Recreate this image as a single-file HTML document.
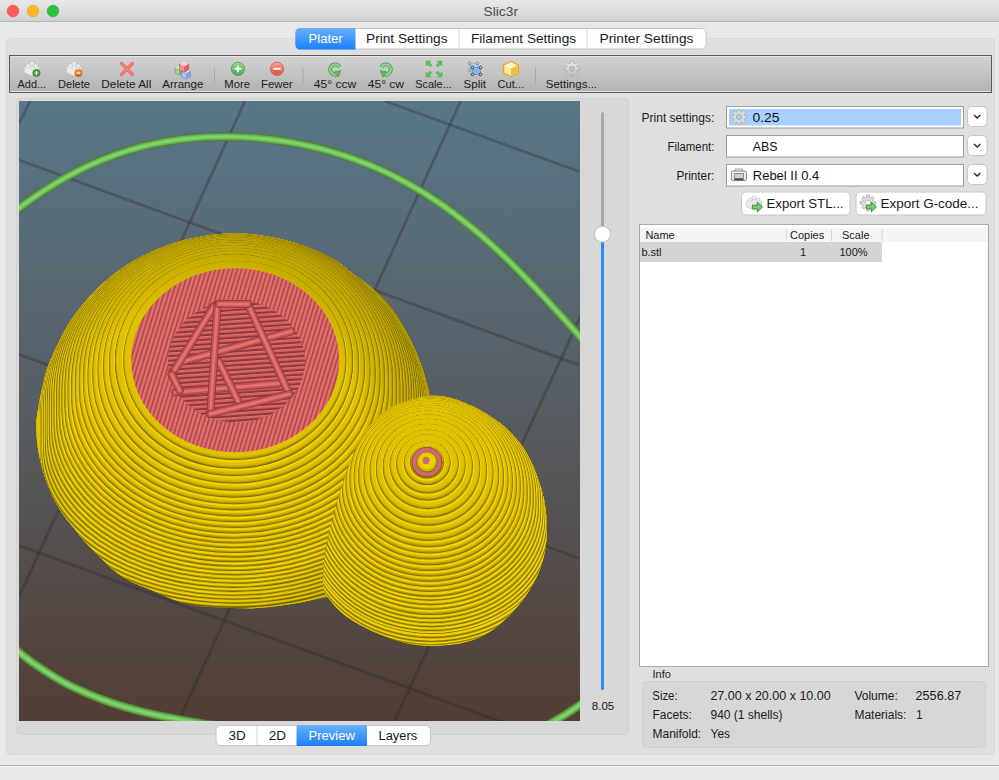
<!DOCTYPE html>
<html><head><meta charset="utf-8"><title>Slic3r</title>
<style>
html,body{margin:0;padding:0;width:999px;height:780px;overflow:hidden;background:#e8e8e8;}
svg{display:block;font-family:"Liberation Sans",sans-serif;}
</style></head><body>
<svg width="999" height="780" viewBox="0 0 999 780">
<defs>
<linearGradient id="gTitle" x1="0" y1="0" x2="0" y2="1"><stop offset="0" stop-color="#e8e8e8"/><stop offset="1" stop-color="#d1d1d1"/></linearGradient>
<linearGradient id="gTool" x1="0" y1="0" x2="0" y2="1"><stop offset="0" stop-color="#d2d2d2"/><stop offset="1" stop-color="#b3b3b3"/></linearGradient>
<linearGradient id="gBlue" x1="0" y1="0" x2="0" y2="1"><stop offset="0" stop-color="#69b1fb"/><stop offset="1" stop-color="#1b7ffb"/></linearGradient>

</defs>
<!-- window -->
<rect x="0" y="0" width="999" height="780" fill="#e8e8e8"/>
<rect x="0" y="0" width="999" height="21.5" fill="url(#gTitle)"/>
<rect x="0" y="21" width="999" height="1" fill="#b8b8b8"/>
<circle cx="13" cy="11" r="5.8" fill="#fd5c55" stroke="#e0443e" stroke-width="0.6"/>
<circle cx="33" cy="11" r="5.8" fill="#fdb82d" stroke="#dea024" stroke-width="0.6"/>
<circle cx="53" cy="11" r="5.8" fill="#29c43f" stroke="#1ca92d" stroke-width="0.6"/>
<text x="483.5" y="16" font-size="13" fill="#4b4b4b" textLength="34.5" lengthAdjust="spacingAndGlyphs">Slic3r</text>

<!-- group box -->
<rect x="6.5" y="38.5" width="988" height="716" rx="3.5" fill="#dfdfdf" stroke="#d9d9d9"/>
<!-- bottom status separator -->
<rect x="0" y="765" width="999" height="1" fill="#afafaf"/>
<rect x="0" y="766" width="999" height="1" fill="#f8f8f8"/>
<rect x="0" y="767" width="999" height="13" fill="#e8e8e8"/>

<!-- tabs -->
<rect x="295.5" y="28.5" width="410.5" height="20.5" rx="4.5" fill="#ffffff" stroke="#c5c5c5"/>
<path d="M300,28 h55.5 v21.5 h-55.5 a4.5,4.5 0 0 1 -4.5,-4.5 v-12.5 a4.5,4.5 0 0 1 4.5,-4.5z" fill="url(#gBlue)"/>
<rect x="458.5" y="29" width="1" height="20" fill="#dcdcdc"/>
<rect x="586.5" y="29" width="1" height="20" fill="#dcdcdc"/>
<g font-size="13" fill="#1a1a1a">
<text x="308.6" y="42.8" fill="#ffffff" textLength="34" lengthAdjust="spacingAndGlyphs">Plater</text>
<text x="366" y="42.8" textLength="81.5" lengthAdjust="spacingAndGlyphs">Print Settings</text>
<text x="471" y="42.8" textLength="105" lengthAdjust="spacingAndGlyphs">Filament Settings</text>
<text x="599.5" y="42.8" textLength="94" lengthAdjust="spacingAndGlyphs">Printer Settings</text>
</g>

<!-- toolbar -->
<rect x="9" y="55" width="983" height="38" fill="#5a5a5a"/>
<rect x="10" y="56" width="981" height="36" fill="#e6e6e6"/>
<rect x="10" y="57" width="981" height="34" fill="url(#gTool)"/>
<rect x="10" y="91" width="981" height="1" fill="#e2e2e2"/>
<g fill="#a9a9a9">
<rect x="214" y="68" width="1" height="16"/>
<rect x="302.5" y="68" width="1" height="16"/>
<rect x="535" y="68" width="1" height="16"/>
</g>
<g font-size="11" fill="#1b1b1b" text-anchor="middle">
<text x="31.8" y="88" textLength="28.5" lengthAdjust="spacingAndGlyphs">Add...</text>
<text x="74" y="88" textLength="32" lengthAdjust="spacingAndGlyphs">Delete</text>
<text x="126.3" y="88" textLength="50" lengthAdjust="spacingAndGlyphs">Delete All</text>
<text x="182.8" y="88" textLength="41" lengthAdjust="spacingAndGlyphs">Arrange</text>
<text x="237.2" y="88" textLength="25.7" lengthAdjust="spacingAndGlyphs">More</text>
<text x="276.8" y="88" textLength="31.6" lengthAdjust="spacingAndGlyphs">Fewer</text>
<text x="335" y="88" textLength="42.6" lengthAdjust="spacingAndGlyphs">45° ccw</text>
<text x="385.9" y="88" textLength="36.3" lengthAdjust="spacingAndGlyphs">45° cw</text>
<text x="433.5" y="88" textLength="36.6" lengthAdjust="spacingAndGlyphs">Scale...</text>
<text x="474.8" y="88" textLength="22.5" lengthAdjust="spacingAndGlyphs">Split</text>
<text x="510.8" y="88" textLength="26.5" lengthAdjust="spacingAndGlyphs">Cut...</text>
<text x="571.4" y="88" textLength="51.3" lengthAdjust="spacingAndGlyphs">Settings...</text>
</g>

<!-- left panel -->
<rect x="16.5" y="98.5" width="612" height="636" rx="3.5" fill="#d8d8d8" stroke="#d2d2d2"/>
<defs>
<clipPath id="cv"><rect x="19" y="101" width="561" height="620"/></clipPath>
<linearGradient id="gBg" x1="0" y1="0" x2="0" y2="1"><stop offset="0" stop-color="#587787"/><stop offset="0.45" stop-color="#575f66"/><stop offset="1" stop-color="#523e34"/></linearGradient>
<pattern id="pinkHatch" patternUnits="userSpaceOnUse" width="4.2" height="4" patternTransform="rotate(17)"><rect width="4.2" height="4" fill="#e46c6c"/><rect x="2.5" width="1.7" height="4" fill="#ad4c4c"/></pattern>
<pattern id="pinkStripe" patternUnits="userSpaceOnUse" width="4" height="4.6" patternTransform="rotate(-4)"><rect width="4" height="4.6" fill="#cf5c5c"/><rect y="0" width="4" height="1.2" fill="#e26e6e"/><rect y="2.8" width="4" height="1.8" fill="#8a3838"/></pattern>
</defs>
<g clip-path="url(#cv)">
<rect x="19" y="101" width="561" height="620" fill="url(#gBg)"/>
<g stroke="#262626" stroke-opacity="0.33" stroke-width="2.8" fill="none">
<line x1="384.6" y1="101" x2="579" y2="171.5"/>
<line x1="19" y1="160" x2="579" y2="365.1"/>
<line x1="19" y1="354.5" x2="579" y2="558.3"/>
<line x1="19" y1="545.6" x2="579" y2="750.2"/>
<line x1="30.2" y1="101" x2="19" y2="123.4"/>
<line x1="245" y1="101" x2="19" y2="597"/>
<line x1="460.7" y1="101" x2="178.6" y2="721"/>
<line x1="679.5" y1="101" x2="394.5" y2="721"/>
</g>
<path d="M-10,230.5 C-7.5,228.57 -1.67,223.97 5,218.9 C11.67,213.83 21.67,205.97 30,200.1 C38.33,194.23 46.67,188.73 55,183.7 C63.33,178.67 71.67,174.07 80,169.9 C88.33,165.73 96.67,162.02 105,158.7 C113.33,155.38 121.67,152.52 130,150 C138.33,147.48 146.67,145.37 155,143.6 C163.33,141.83 171.67,140.48 180,139.4 C188.33,138.32 196.67,137.55 205,137.1 C213.33,136.65 221.67,136.58 230,136.7 C238.33,136.82 246.67,137.13 255,137.8 C263.33,138.47 271.67,139.48 280,140.7 C288.33,141.92 296.67,143.33 305,145.1 C313.33,146.87 321.67,148.92 330,151.3 C338.33,153.68 346.67,156.37 355,159.4 C363.33,162.43 371.67,165.73 380,169.5 C388.33,173.27 396.67,177.45 405,182 C413.33,186.55 421.67,191.42 430,196.8 C438.33,202.18 446.67,208.02 455,214.3 C463.33,220.58 471.67,227.35 480,234.5 C488.33,241.65 496.67,249.23 505,257.2 C513.33,265.17 521.67,273.67 530,282.3 C538.33,290.93 546.67,299.93 555,309 C563.33,318.07 572.5,328.2 580,336.7 C587.5,345.2 596.67,356.12 600,360" fill="none" stroke="#4b7a2e" stroke-width="8.8" stroke-linecap="round"/>
<path d="M-10,230.5 C-7.5,228.57 -1.67,223.97 5,218.9 C11.67,213.83 21.67,205.97 30,200.1 C38.33,194.23 46.67,188.73 55,183.7 C63.33,178.67 71.67,174.07 80,169.9 C88.33,165.73 96.67,162.02 105,158.7 C113.33,155.38 121.67,152.52 130,150 C138.33,147.48 146.67,145.37 155,143.6 C163.33,141.83 171.67,140.48 180,139.4 C188.33,138.32 196.67,137.55 205,137.1 C213.33,136.65 221.67,136.58 230,136.7 C238.33,136.82 246.67,137.13 255,137.8 C263.33,138.47 271.67,139.48 280,140.7 C288.33,141.92 296.67,143.33 305,145.1 C313.33,146.87 321.67,148.92 330,151.3 C338.33,153.68 346.67,156.37 355,159.4 C363.33,162.43 371.67,165.73 380,169.5 C388.33,173.27 396.67,177.45 405,182 C413.33,186.55 421.67,191.42 430,196.8 C438.33,202.18 446.67,208.02 455,214.3 C463.33,220.58 471.67,227.35 480,234.5 C488.33,241.65 496.67,249.23 505,257.2 C513.33,265.17 521.67,273.67 530,282.3 C538.33,290.93 546.67,299.93 555,309 C563.33,318.07 572.5,328.2 580,336.7 C587.5,345.2 596.67,356.12 600,360" fill="none" stroke="#5a963f" stroke-width="7.4" stroke-linecap="round"/>
<path d="M-10,230.5 C-7.5,228.57 -1.67,223.97 5,218.9 C11.67,213.83 21.67,205.97 30,200.1 C38.33,194.23 46.67,188.73 55,183.7 C63.33,178.67 71.67,174.07 80,169.9 C88.33,165.73 96.67,162.02 105,158.7 C113.33,155.38 121.67,152.52 130,150 C138.33,147.48 146.67,145.37 155,143.6 C163.33,141.83 171.67,140.48 180,139.4 C188.33,138.32 196.67,137.55 205,137.1 C213.33,136.65 221.67,136.58 230,136.7 C238.33,136.82 246.67,137.13 255,137.8 C263.33,138.47 271.67,139.48 280,140.7 C288.33,141.92 296.67,143.33 305,145.1 C313.33,146.87 321.67,148.92 330,151.3 C338.33,153.68 346.67,156.37 355,159.4 C363.33,162.43 371.67,165.73 380,169.5 C388.33,173.27 396.67,177.45 405,182 C413.33,186.55 421.67,191.42 430,196.8 C438.33,202.18 446.67,208.02 455,214.3 C463.33,220.58 471.67,227.35 480,234.5 C488.33,241.65 496.67,249.23 505,257.2 C513.33,265.17 521.67,273.67 530,282.3 C538.33,290.93 546.67,299.93 555,309 C563.33,318.07 572.5,328.2 580,336.7 C587.5,345.2 596.67,356.12 600,360" fill="none" stroke="#66aa4e" stroke-width="6.0" stroke-linecap="round"/>
<path d="M-10,230.5 C-7.5,228.57 -1.67,223.97 5,218.9 C11.67,213.83 21.67,205.97 30,200.1 C38.33,194.23 46.67,188.73 55,183.7 C63.33,178.67 71.67,174.07 80,169.9 C88.33,165.73 96.67,162.02 105,158.7 C113.33,155.38 121.67,152.52 130,150 C138.33,147.48 146.67,145.37 155,143.6 C163.33,141.83 171.67,140.48 180,139.4 C188.33,138.32 196.67,137.55 205,137.1 C213.33,136.65 221.67,136.58 230,136.7 C238.33,136.82 246.67,137.13 255,137.8 C263.33,138.47 271.67,139.48 280,140.7 C288.33,141.92 296.67,143.33 305,145.1 C313.33,146.87 321.67,148.92 330,151.3 C338.33,153.68 346.67,156.37 355,159.4 C363.33,162.43 371.67,165.73 380,169.5 C388.33,173.27 396.67,177.45 405,182 C413.33,186.55 421.67,191.42 430,196.8 C438.33,202.18 446.67,208.02 455,214.3 C463.33,220.58 471.67,227.35 480,234.5 C488.33,241.65 496.67,249.23 505,257.2 C513.33,265.17 521.67,273.67 530,282.3 C538.33,290.93 546.67,299.93 555,309 C563.33,318.07 572.5,328.2 580,336.7 C587.5,345.2 596.67,356.12 600,360" fill="none" stroke="#70bb5a" stroke-width="4.6" stroke-linecap="round"/>
<path d="M-10,230.5 C-7.5,228.57 -1.67,223.97 5,218.9 C11.67,213.83 21.67,205.97 30,200.1 C38.33,194.23 46.67,188.73 55,183.7 C63.33,178.67 71.67,174.07 80,169.9 C88.33,165.73 96.67,162.02 105,158.7 C113.33,155.38 121.67,152.52 130,150 C138.33,147.48 146.67,145.37 155,143.6 C163.33,141.83 171.67,140.48 180,139.4 C188.33,138.32 196.67,137.55 205,137.1 C213.33,136.65 221.67,136.58 230,136.7 C238.33,136.82 246.67,137.13 255,137.8 C263.33,138.47 271.67,139.48 280,140.7 C288.33,141.92 296.67,143.33 305,145.1 C313.33,146.87 321.67,148.92 330,151.3 C338.33,153.68 346.67,156.37 355,159.4 C363.33,162.43 371.67,165.73 380,169.5 C388.33,173.27 396.67,177.45 405,182 C413.33,186.55 421.67,191.42 430,196.8 C438.33,202.18 446.67,208.02 455,214.3 C463.33,220.58 471.67,227.35 480,234.5 C488.33,241.65 496.67,249.23 505,257.2 C513.33,265.17 521.67,273.67 530,282.3 C538.33,290.93 546.67,299.93 555,309 C563.33,318.07 572.5,328.2 580,336.7 C587.5,345.2 596.67,356.12 600,360" fill="none" stroke="#79c864" stroke-width="3.2" stroke-linecap="round"/>
<path d="M-10,230.5 C-7.5,228.57 -1.67,223.97 5,218.9 C11.67,213.83 21.67,205.97 30,200.1 C38.33,194.23 46.67,188.73 55,183.7 C63.33,178.67 71.67,174.07 80,169.9 C88.33,165.73 96.67,162.02 105,158.7 C113.33,155.38 121.67,152.52 130,150 C138.33,147.48 146.67,145.37 155,143.6 C163.33,141.83 171.67,140.48 180,139.4 C188.33,138.32 196.67,137.55 205,137.1 C213.33,136.65 221.67,136.58 230,136.7 C238.33,136.82 246.67,137.13 255,137.8 C263.33,138.47 271.67,139.48 280,140.7 C288.33,141.92 296.67,143.33 305,145.1 C313.33,146.87 321.67,148.92 330,151.3 C338.33,153.68 346.67,156.37 355,159.4 C363.33,162.43 371.67,165.73 380,169.5 C388.33,173.27 396.67,177.45 405,182 C413.33,186.55 421.67,191.42 430,196.8 C438.33,202.18 446.67,208.02 455,214.3 C463.33,220.58 471.67,227.35 480,234.5 C488.33,241.65 496.67,249.23 505,257.2 C513.33,265.17 521.67,273.67 530,282.3 C538.33,290.93 546.67,299.93 555,309 C563.33,318.07 572.5,328.2 580,336.7 C587.5,345.2 596.67,356.12 600,360" fill="none" stroke="#82d46e" stroke-width="1.7" stroke-linecap="round"/>
<path d="M5,640 C8.33,642.83 18.33,651.83 25,657 C31.67,662.17 38.33,666.67 45,671 C51.67,675.33 58.33,679.42 65,683 C71.67,686.58 78.33,689.58 85,692.5 C91.67,695.42 98.33,698.08 105,700.5 C111.67,702.92 118.33,705.02 125,707 C131.67,708.98 138.33,710.77 145,712.4 C151.67,714.03 158.33,715.45 165,716.8 C171.67,718.15 178.33,719.3 185,720.5 C191.67,721.7 198.33,722.92 205,724 C211.67,725.08 218.33,726 225,727 C231.67,728 241.67,729.5 245,730" fill="none" stroke="#4b7a2e" stroke-width="8.8" stroke-linecap="round"/>
<path d="M5,640 C8.33,642.83 18.33,651.83 25,657 C31.67,662.17 38.33,666.67 45,671 C51.67,675.33 58.33,679.42 65,683 C71.67,686.58 78.33,689.58 85,692.5 C91.67,695.42 98.33,698.08 105,700.5 C111.67,702.92 118.33,705.02 125,707 C131.67,708.98 138.33,710.77 145,712.4 C151.67,714.03 158.33,715.45 165,716.8 C171.67,718.15 178.33,719.3 185,720.5 C191.67,721.7 198.33,722.92 205,724 C211.67,725.08 218.33,726 225,727 C231.67,728 241.67,729.5 245,730" fill="none" stroke="#5a963f" stroke-width="7.4" stroke-linecap="round"/>
<path d="M5,640 C8.33,642.83 18.33,651.83 25,657 C31.67,662.17 38.33,666.67 45,671 C51.67,675.33 58.33,679.42 65,683 C71.67,686.58 78.33,689.58 85,692.5 C91.67,695.42 98.33,698.08 105,700.5 C111.67,702.92 118.33,705.02 125,707 C131.67,708.98 138.33,710.77 145,712.4 C151.67,714.03 158.33,715.45 165,716.8 C171.67,718.15 178.33,719.3 185,720.5 C191.67,721.7 198.33,722.92 205,724 C211.67,725.08 218.33,726 225,727 C231.67,728 241.67,729.5 245,730" fill="none" stroke="#66aa4e" stroke-width="6.0" stroke-linecap="round"/>
<path d="M5,640 C8.33,642.83 18.33,651.83 25,657 C31.67,662.17 38.33,666.67 45,671 C51.67,675.33 58.33,679.42 65,683 C71.67,686.58 78.33,689.58 85,692.5 C91.67,695.42 98.33,698.08 105,700.5 C111.67,702.92 118.33,705.02 125,707 C131.67,708.98 138.33,710.77 145,712.4 C151.67,714.03 158.33,715.45 165,716.8 C171.67,718.15 178.33,719.3 185,720.5 C191.67,721.7 198.33,722.92 205,724 C211.67,725.08 218.33,726 225,727 C231.67,728 241.67,729.5 245,730" fill="none" stroke="#70bb5a" stroke-width="4.6" stroke-linecap="round"/>
<path d="M5,640 C8.33,642.83 18.33,651.83 25,657 C31.67,662.17 38.33,666.67 45,671 C51.67,675.33 58.33,679.42 65,683 C71.67,686.58 78.33,689.58 85,692.5 C91.67,695.42 98.33,698.08 105,700.5 C111.67,702.92 118.33,705.02 125,707 C131.67,708.98 138.33,710.77 145,712.4 C151.67,714.03 158.33,715.45 165,716.8 C171.67,718.15 178.33,719.3 185,720.5 C191.67,721.7 198.33,722.92 205,724 C211.67,725.08 218.33,726 225,727 C231.67,728 241.67,729.5 245,730" fill="none" stroke="#79c864" stroke-width="3.2" stroke-linecap="round"/>
<path d="M5,640 C8.33,642.83 18.33,651.83 25,657 C31.67,662.17 38.33,666.67 45,671 C51.67,675.33 58.33,679.42 65,683 C71.67,686.58 78.33,689.58 85,692.5 C91.67,695.42 98.33,698.08 105,700.5 C111.67,702.92 118.33,705.02 125,707 C131.67,708.98 138.33,710.77 145,712.4 C151.67,714.03 158.33,715.45 165,716.8 C171.67,718.15 178.33,719.3 185,720.5 C191.67,721.7 198.33,722.92 205,724 C211.67,725.08 218.33,726 225,727 C231.67,728 241.67,729.5 245,730" fill="none" stroke="#82d46e" stroke-width="1.7" stroke-linecap="round"/>
<path d="M540,730.5 C542,729.17 548.67,724.62 552,722.5 C555.33,720.38 557,719.62 560,717.8 C563,715.98 566.67,713.77 570,711.6 C573.33,709.43 576.33,707.4 580,704.8 C583.67,702.2 590,697.47 592,696" fill="none" stroke="#4b7a2e" stroke-width="8.8" stroke-linecap="round"/>
<path d="M540,730.5 C542,729.17 548.67,724.62 552,722.5 C555.33,720.38 557,719.62 560,717.8 C563,715.98 566.67,713.77 570,711.6 C573.33,709.43 576.33,707.4 580,704.8 C583.67,702.2 590,697.47 592,696" fill="none" stroke="#5a963f" stroke-width="7.4" stroke-linecap="round"/>
<path d="M540,730.5 C542,729.17 548.67,724.62 552,722.5 C555.33,720.38 557,719.62 560,717.8 C563,715.98 566.67,713.77 570,711.6 C573.33,709.43 576.33,707.4 580,704.8 C583.67,702.2 590,697.47 592,696" fill="none" stroke="#66aa4e" stroke-width="6.0" stroke-linecap="round"/>
<path d="M540,730.5 C542,729.17 548.67,724.62 552,722.5 C555.33,720.38 557,719.62 560,717.8 C563,715.98 566.67,713.77 570,711.6 C573.33,709.43 576.33,707.4 580,704.8 C583.67,702.2 590,697.47 592,696" fill="none" stroke="#70bb5a" stroke-width="4.6" stroke-linecap="round"/>
<path d="M540,730.5 C542,729.17 548.67,724.62 552,722.5 C555.33,720.38 557,719.62 560,717.8 C563,715.98 566.67,713.77 570,711.6 C573.33,709.43 576.33,707.4 580,704.8 C583.67,702.2 590,697.47 592,696" fill="none" stroke="#79c864" stroke-width="3.2" stroke-linecap="round"/>
<path d="M540,730.5 C542,729.17 548.67,724.62 552,722.5 C555.33,720.38 557,719.62 560,717.8 C563,715.98 566.67,713.77 570,711.6 C573.33,709.43 576.33,707.4 580,704.8 C583.67,702.2 590,697.47 592,696" fill="none" stroke="#82d46e" stroke-width="1.7" stroke-linecap="round"/>
<clipPath id="cBig"><path d="M234,233.2 C246.73,233.03 259,235.1 270,237 C281,238.9 289.72,241.1 300,244.6 C310.28,248.1 322.37,252.72 331.7,258 C341.03,263.28 349.12,271.23 356,276.3 C362.88,281.37 366.92,283.12 373,288.4 C379.08,293.68 386.83,300.68 392.5,308 C398.17,315.32 402.53,323.8 407,332.3 C411.47,340.8 416.03,350.88 419.3,359 C422.57,367.12 424.77,374.5 426.6,381 C428.43,387.5 429.4,389.83 430.3,398 C431.2,406.17 432.38,418 432,430 C431.62,442 430.83,455 428,470 C425.17,485 421.33,504.67 415,520 C408.67,535.33 400.83,550.33 390,562 C379.17,573.67 363.5,583.5 350,590 C336.5,596.5 322.33,598.17 309,601 C295.67,603.83 281.67,605.78 270,607 C258.33,608.22 252.33,608.7 239,608.3 C225.67,607.9 204.17,607.48 190,604.6 C175.83,601.72 165.38,595.77 154,591 C142.62,586.23 131.7,582.67 121.7,576 C111.7,569.33 101.62,558.6 94,551 C86.38,543.4 81.83,537.57 76,530.4 C70.17,523.23 64,516.4 59,508 C54,499.6 49.47,489.67 46,480 C42.53,470.33 39.78,459.17 38.2,450 C36.62,440.83 36.5,431.97 36.5,425 C36.5,418.03 37.12,414.87 38.2,408.2 C39.28,401.53 41.1,392.63 43,385 C44.9,377.37 45.22,372.73 49.6,362.4 C53.98,352.07 61.67,335 69.3,323 C76.93,311 85.62,300.18 95.4,290.4 C105.18,280.62 117.1,271.37 128,264.3 C138.9,257.23 149.87,252.38 160.8,248 C171.73,243.62 181.4,240.47 193.6,238 C205.8,235.53 221.27,233.37 234,233.2Z"/></clipPath>
<clipPath id="cSmall"><path d="M440,395.5 C450.55,396.62 463.3,402.07 473.3,406.7 C483.3,411.33 492.22,417.2 500,423.3 C507.78,429.4 514.45,436.07 520,443.3 C525.55,450.53 529.42,457.8 533.3,466.7 C537.18,475.6 541.07,487.27 543.3,496.7 C545.53,506.13 546.42,514.42 546.7,523.3 C546.98,532.18 546.67,541.1 545,550 C543.33,558.9 540.87,567.82 536.7,576.7 C532.53,585.58 526.67,594.97 520,603.3 C513.33,611.63 504.48,620.58 496.7,626.7 C488.92,632.82 482.2,636.87 473.3,640 C464.4,643.13 453.85,644.83 443.3,645.5 C432.75,646.17 421.1,646.08 410,644 C398.9,641.92 387.25,637.55 376.7,633 C366.15,628.45 354.32,622.03 346.7,616.7 C339.08,611.37 334.9,606 331,601 C327.1,596 324.22,594.65 323.3,586.7 C322.38,578.75 323.88,564.97 325.5,553.3 C327.12,541.63 330.25,527.8 333,516.7 C335.75,505.6 338.75,496.7 342,486.7 C345.25,476.7 348.38,466.15 352.5,456.7 C356.62,447.25 361,437.78 366.7,430 C372.4,422.22 379.48,415 386.7,410 C393.92,405 401.12,402.42 410,400 C418.88,397.58 429.45,394.38 440,395.5Z"/></clipPath>
<g clip-path="url(#cBig)">
<path d="M234,233.2 C246.73,233.03 259,235.1 270,237 C281,238.9 289.72,241.1 300,244.6 C310.28,248.1 322.37,252.72 331.7,258 C341.03,263.28 349.12,271.23 356,276.3 C362.88,281.37 366.92,283.12 373,288.4 C379.08,293.68 386.83,300.68 392.5,308 C398.17,315.32 402.53,323.8 407,332.3 C411.47,340.8 416.03,350.88 419.3,359 C422.57,367.12 424.77,374.5 426.6,381 C428.43,387.5 429.4,389.83 430.3,398 C431.2,406.17 432.38,418 432,430 C431.62,442 430.83,455 428,470 C425.17,485 421.33,504.67 415,520 C408.67,535.33 400.83,550.33 390,562 C379.17,573.67 363.5,583.5 350,590 C336.5,596.5 322.33,598.17 309,601 C295.67,603.83 281.67,605.78 270,607 C258.33,608.22 252.33,608.7 239,608.3 C225.67,607.9 204.17,607.48 190,604.6 C175.83,601.72 165.38,595.77 154,591 C142.62,586.23 131.7,582.67 121.7,576 C111.7,569.33 101.62,558.6 94,551 C86.38,543.4 81.83,537.57 76,530.4 C70.17,523.23 64,516.4 59,508 C54,499.6 49.47,489.67 46,480 C42.53,470.33 39.78,459.17 38.2,450 C36.62,440.83 36.5,431.97 36.5,425 C36.5,418.03 37.12,414.87 38.2,408.2 C39.28,401.53 41.1,392.63 43,385 C44.9,377.37 45.22,372.73 49.6,362.4 C53.98,352.07 61.67,335 69.3,323 C76.93,311 85.62,300.18 95.4,290.4 C105.18,280.62 117.1,271.37 128,264.3 C138.9,257.23 149.87,252.38 160.8,248 C171.73,243.62 181.4,240.47 193.6,238 C205.8,235.53 221.27,233.37 234,233.2Z" fill="#b89d00"/>
<path d="M36.5,430.1 A197.5,177.8 0 0 1 431.5,430.1 L431.5,489.4 A197.5,118.5 0 0 1 36.5,489.4Z" fill="#7a6600"/>
<path d="M36.95,429.75 A197.05,177.35 0 0 1 431.05,429.75 L431.05,489.05 A197.05,118.05 0 0 1 36.95,489.05Z" fill="#ad9200"/>
<path d="M37.5,429.2 A196.5,176.8 0 0 1 430.5,429.2 L430.5,488.5 A196.5,117.5 0 0 1 37.5,488.5Z" fill="#d0b300"/>
<path d="M38.3,428.5 A195.7,176 0 0 1 429.7,428.5 L429.7,487.8 A195.7,116.7 0 0 1 38.3,487.8Z" fill="#e0c300"/>
<path d="M36,430.6 A198,178.3 0 0 1 432,430.6 L432,489.53 A198,119.37 0 0 1 36,489.53Z" fill="none" stroke="#f2d800" stroke-width="1.4"/>
<path d="M36.5,429.6 A197.5,177.8 0 0 1 431.5,429.6 L431.5,488.53 A197.5,118.87 0 0 1 36.5,488.53Z" fill="#7a6600"/>
<path d="M36.95,429.25 A197.05,177.35 0 0 1 431.05,429.25 L431.05,488.18 A197.05,118.42 0 0 1 36.95,488.18Z" fill="#ad9200"/>
<path d="M37.5,428.7 A196.5,176.8 0 0 1 430.5,428.7 L430.5,487.63 A196.5,117.87 0 0 1 37.5,487.63Z" fill="#d0b300"/>
<path d="M38.3,428 A195.7,176 0 0 1 429.7,428 L429.7,486.93 A195.7,117.07 0 0 1 38.3,486.93Z" fill="#e0c300"/>
<path d="M36.22,427.03 A197.78,178.1 0 0 1 431.78,427.03 L431.78,483.24 A197.78,121.9 0 0 1 36.22,483.24Z" fill="none" stroke="#f2d800" stroke-width="1.4"/>
<path d="M36.72,426.03 A197.28,177.6 0 0 1 431.28,426.03 L431.28,482.24 A197.28,121.4 0 0 1 36.72,482.24Z" fill="#7a6600"/>
<path d="M37.17,425.68 A196.83,177.15 0 0 1 430.83,425.68 L430.83,481.89 A196.83,120.95 0 0 1 37.17,481.89Z" fill="#ad9200"/>
<path d="M37.72,425.13 A196.28,176.6 0 0 1 430.28,425.13 L430.28,481.34 A196.28,120.4 0 0 1 37.72,481.34Z" fill="#d0b300"/>
<path d="M38.52,424.43 A195.48,175.8 0 0 1 429.48,424.43 L429.48,480.64 A195.48,119.6 0 0 1 38.52,480.64Z" fill="#e0c300"/>
<path d="M36.74,423.67 A197.26,177.64 0 0 1 431.26,423.67 L431.26,477.22 A197.26,124.08 0 0 1 36.74,477.22Z" fill="none" stroke="#f2d800" stroke-width="1.4"/>
<path d="M37.24,422.67 A196.76,177.14 0 0 1 430.76,422.67 L430.76,476.22 A196.76,123.58 0 0 1 37.24,476.22Z" fill="#7a6600"/>
<path d="M37.69,422.32 A196.31,176.69 0 0 1 430.31,422.32 L430.31,475.87 A196.31,123.13 0 0 1 37.69,475.87Z" fill="#ad9200"/>
<path d="M38.24,421.77 A195.76,176.14 0 0 1 429.76,421.77 L429.76,475.32 A195.76,122.58 0 0 1 38.24,475.32Z" fill="#d0b300"/>
<path d="M39.04,421.07 A194.96,175.34 0 0 1 428.96,421.07 L428.96,474.62 A194.96,121.78 0 0 1 39.04,474.62Z" fill="#e0c300"/>
<path d="M37.51,420.47 A196.49,176.94 0 0 1 430.49,420.47 L430.49,471.43 A196.49,125.98 0 0 1 37.51,471.43Z" fill="none" stroke="#f2d800" stroke-width="1.4"/>
<path d="M38.01,419.47 A195.99,176.44 0 0 1 429.99,419.47 L429.99,470.43 A195.99,125.48 0 0 1 38.01,470.43Z" fill="#7a6600"/>
<path d="M38.46,419.12 A195.54,175.99 0 0 1 429.54,419.12 L429.54,470.08 A195.54,125.03 0 0 1 38.46,470.08Z" fill="#ad9200"/>
<path d="M39.01,418.57 A194.99,175.44 0 0 1 428.99,418.57 L428.99,469.53 A194.99,124.48 0 0 1 39.01,469.53Z" fill="#d0b300"/>
<path d="M39.81,417.87 A194.19,174.64 0 0 1 428.19,417.87 L428.19,468.83 A194.19,123.68 0 0 1 39.81,468.83Z" fill="#e0c300"/>
<path d="M38.51,417.41 A195.49,176.04 0 0 1 429.49,417.41 L429.49,465.83 A195.49,127.61 0 0 1 38.51,465.83Z" fill="none" stroke="#f2d800" stroke-width="1.4"/>
<path d="M39.01,416.41 A194.99,175.54 0 0 1 428.99,416.41 L428.99,464.83 A194.99,127.11 0 0 1 39.01,464.83Z" fill="#7a6600"/>
<path d="M39.46,416.06 A194.54,175.09 0 0 1 428.54,416.06 L428.54,464.48 A194.54,126.66 0 0 1 39.46,464.48Z" fill="#ad9200"/>
<path d="M40.01,415.51 A193.99,174.54 0 0 1 427.99,415.51 L427.99,463.93 A193.99,126.11 0 0 1 40.01,463.93Z" fill="#d0b300"/>
<path d="M40.81,414.81 A193.19,173.74 0 0 1 427.19,414.81 L427.19,463.23 A193.19,125.31 0 0 1 40.81,463.23Z" fill="#e0c300"/>
<path d="M39.72,414.46 A194.28,174.95 0 0 1 428.28,414.46 L428.28,460.4 A194.28,129.01 0 0 1 39.72,460.4Z" fill="none" stroke="#f2d800" stroke-width="1.4"/>
<path d="M40.22,413.46 A193.78,174.45 0 0 1 427.78,413.46 L427.78,459.4 A193.78,128.51 0 0 1 40.22,459.4Z" fill="#7a6600"/>
<path d="M40.67,413.11 A193.33,174 0 0 1 427.33,413.11 L427.33,459.05 A193.33,128.06 0 0 1 40.67,459.05Z" fill="#ad9200"/>
<path d="M41.22,412.56 A192.78,173.45 0 0 1 426.78,412.56 L426.78,458.5 A192.78,127.51 0 0 1 41.22,458.5Z" fill="#d0b300"/>
<path d="M42.02,411.86 A191.98,172.65 0 0 1 425.98,411.86 L425.98,457.8 A191.98,126.71 0 0 1 42.02,457.8Z" fill="#e0c300"/>
<path d="M41.12,411.62 A192.88,173.69 0 0 1 426.88,411.62 L426.88,455.11 A192.88,130.2 0 0 1 41.12,455.11Z" fill="none" stroke="#f2d800" stroke-width="1.4"/>
<path d="M41.62,410.62 A192.38,173.19 0 0 1 426.38,410.62 L426.38,454.11 A192.38,129.7 0 0 1 41.62,454.11Z" fill="#7a6600"/>
<path d="M42.07,410.27 A191.93,172.74 0 0 1 425.93,410.27 L425.93,453.76 A191.93,129.25 0 0 1 42.07,453.76Z" fill="#ad9200"/>
<path d="M42.62,409.72 A191.38,172.19 0 0 1 425.38,409.72 L425.38,453.21 A191.38,128.7 0 0 1 42.62,453.21Z" fill="#d0b300"/>
<path d="M43.42,409.02 A190.58,171.39 0 0 1 424.58,409.02 L424.58,452.51 A190.58,127.9 0 0 1 43.42,452.51Z" fill="#e0c300"/>
<path d="M42.7,408.87 A191.3,172.27 0 0 1 425.3,408.87 L425.3,449.96 A191.3,131.18 0 0 1 42.7,449.96Z" fill="none" stroke="#f2d800" stroke-width="1.4"/>
<path d="M43.2,407.87 A190.8,171.77 0 0 1 424.8,407.87 L424.8,448.96 A190.8,130.68 0 0 1 43.2,448.96Z" fill="#7a6600"/>
<path d="M43.65,407.52 A190.35,171.32 0 0 1 424.35,407.52 L424.35,448.61 A190.35,130.23 0 0 1 43.65,448.61Z" fill="#ad9200"/>
<path d="M44.2,406.97 A189.8,170.77 0 0 1 423.8,406.97 L423.8,448.06 A189.8,129.68 0 0 1 44.2,448.06Z" fill="#d0b300"/>
<path d="M45,406.27 A189,169.97 0 0 1 423,406.27 L423,447.36 A189,128.88 0 0 1 45,447.36Z" fill="#e0c300"/>
<path d="M44.44,406.19 A189.56,170.7 0 0 1 423.56,406.19 L423.56,444.93 A189.56,131.97 0 0 1 44.44,444.93Z" fill="none" stroke="#f2d800" stroke-width="1.4"/>
<path d="M44.94,405.19 A189.06,170.2 0 0 1 423.06,405.19 L423.06,443.93 A189.06,131.47 0 0 1 44.94,443.93Z" fill="#7a6600"/>
<path d="M45.39,404.84 A188.61,169.75 0 0 1 422.61,404.84 L422.61,443.58 A188.61,131.02 0 0 1 45.39,443.58Z" fill="#ad9200"/>
<path d="M45.94,404.29 A188.06,169.2 0 0 1 422.06,404.29 L422.06,443.03 A188.06,130.47 0 0 1 45.94,443.03Z" fill="#d0b300"/>
<path d="M46.74,403.59 A187.26,168.4 0 0 1 421.26,403.59 L421.26,442.33 A187.26,129.67 0 0 1 46.74,442.33Z" fill="#e0c300"/>
<path d="M46.35,403.59 A187.65,168.98 0 0 1 421.65,403.59 L421.65,440 A187.65,132.57 0 0 1 46.35,440Z" fill="none" stroke="#f2d800" stroke-width="1.4"/>
<path d="M46.85,402.59 A187.15,168.48 0 0 1 421.15,402.59 L421.15,439 A187.15,132.07 0 0 1 46.85,439Z" fill="#7a6600"/>
<path d="M47.3,402.24 A186.7,168.03 0 0 1 420.7,402.24 L420.7,438.65 A186.7,131.62 0 0 1 47.3,438.65Z" fill="#ad9200"/>
<path d="M47.85,401.69 A186.15,167.48 0 0 1 420.15,401.69 L420.15,438.1 A186.15,131.07 0 0 1 47.85,438.1Z" fill="#d0b300"/>
<path d="M48.65,400.99 A185.35,166.68 0 0 1 419.35,400.99 L419.35,437.4 A185.35,130.27 0 0 1 48.65,437.4Z" fill="#e0c300"/>
<path d="M48.41,401.06 A185.59,167.12 0 0 1 419.59,401.06 L419.59,435.19 A185.59,132.99 0 0 1 48.41,435.19Z" fill="none" stroke="#f2d800" stroke-width="1.4"/>
<path d="M48.91,400.06 A185.09,166.62 0 0 1 419.09,400.06 L419.09,434.19 A185.09,132.49 0 0 1 48.91,434.19Z" fill="#7a6600"/>
<path d="M49.36,399.71 A184.64,166.17 0 0 1 418.64,399.71 L418.64,433.84 A184.64,132.04 0 0 1 49.36,433.84Z" fill="#ad9200"/>
<path d="M49.91,399.16 A184.09,165.62 0 0 1 418.09,399.16 L418.09,433.29 A184.09,131.49 0 0 1 49.91,433.29Z" fill="#d0b300"/>
<path d="M50.71,398.46 A183.29,164.82 0 0 1 417.29,398.46 L417.29,432.59 A183.29,130.69 0 0 1 50.71,432.59Z" fill="#e0c300"/>
<path d="M50.63,398.58 A183.37,165.13 0 0 1 417.37,398.58 L417.37,430.47 A183.37,133.24 0 0 1 50.63,430.47Z" fill="none" stroke="#f2d800" stroke-width="1.4"/>
<path d="M51.13,397.58 A182.87,164.63 0 0 1 416.87,397.58 L416.87,429.47 A182.87,132.74 0 0 1 51.13,429.47Z" fill="#7a6600"/>
<path d="M51.58,397.23 A182.42,164.18 0 0 1 416.42,397.23 L416.42,429.12 A182.42,132.29 0 0 1 51.58,429.12Z" fill="#ad9200"/>
<path d="M52.13,396.68 A181.87,163.63 0 0 1 415.87,396.68 L415.87,428.57 A181.87,131.74 0 0 1 52.13,428.57Z" fill="#d0b300"/>
<path d="M52.93,395.98 A181.07,162.83 0 0 1 415.07,395.98 L415.07,427.87 A181.07,130.94 0 0 1 52.93,427.87Z" fill="#e0c300"/>
<path d="M52.99,396.16 A181.01,163 0 0 1 415.01,396.16 L415.01,425.84 A181.01,133.32 0 0 1 52.99,425.84Z" fill="none" stroke="#f2d800" stroke-width="1.4"/>
<path d="M53.49,395.16 A180.51,162.5 0 0 1 414.51,395.16 L414.51,424.84 A180.51,132.82 0 0 1 53.49,424.84Z" fill="#7a6600"/>
<path d="M53.94,394.81 A180.06,162.05 0 0 1 414.06,394.81 L414.06,424.49 A180.06,132.37 0 0 1 53.94,424.49Z" fill="#ad9200"/>
<path d="M54.49,394.26 A179.51,161.5 0 0 1 413.51,394.26 L413.51,423.94 A179.51,131.82 0 0 1 54.49,423.94Z" fill="#d0b300"/>
<path d="M55.29,393.56 A178.71,160.7 0 0 1 412.71,393.56 L412.71,423.24 A178.71,131.02 0 0 1 55.29,423.24Z" fill="#e0c300"/>
<path d="M55.5,393.79 A178.5,160.74 0 0 1 412.5,393.79 L412.5,421.31 A178.5,133.23 0 0 1 55.5,421.31Z" fill="none" stroke="#f2d800" stroke-width="1.4"/>
<path d="M56,392.79 A178,160.24 0 0 1 412,392.79 L412,420.31 A178,132.73 0 0 1 56,420.31Z" fill="#7a6600"/>
<path d="M56.45,392.44 A177.55,159.79 0 0 1 411.55,392.44 L411.55,419.96 A177.55,132.28 0 0 1 56.45,419.96Z" fill="#ad9200"/>
<path d="M57,391.89 A177,159.24 0 0 1 411,391.89 L411,419.41 A177,131.73 0 0 1 57,419.41Z" fill="#d0b300"/>
<path d="M57.8,391.19 A176.2,158.44 0 0 1 410.2,391.19 L410.2,418.71 A176.2,130.93 0 0 1 57.8,418.71Z" fill="#e0c300"/>
<path d="M58.15,391.48 A175.85,158.36 0 0 1 409.85,391.48 L409.85,416.87 A175.85,132.96 0 0 1 58.15,416.87Z" fill="none" stroke="#f2d800" stroke-width="1.4"/>
<path d="M58.65,390.48 A175.35,157.86 0 0 1 409.35,390.48 L409.35,415.87 A175.35,132.46 0 0 1 58.65,415.87Z" fill="#7a6600"/>
<path d="M59.1,390.13 A174.9,157.41 0 0 1 408.9,390.13 L408.9,415.52 A174.9,132.01 0 0 1 59.1,415.52Z" fill="#ad9200"/>
<path d="M59.65,389.58 A174.35,156.86 0 0 1 408.35,389.58 L408.35,414.97 A174.35,131.46 0 0 1 59.65,414.97Z" fill="#d0b300"/>
<path d="M60.45,388.88 A173.55,156.06 0 0 1 407.55,388.88 L407.55,414.27 A173.55,130.66 0 0 1 60.45,414.27Z" fill="#e0c300"/>
<path d="M60.95,389.21 A173.05,155.84 0 0 1 407.05,389.21 L407.05,412.52 A173.05,132.53 0 0 1 60.95,412.52Z" fill="none" stroke="#f2d800" stroke-width="1.4"/>
<path d="M61.45,388.21 A172.55,155.34 0 0 1 406.55,388.21 L406.55,411.52 A172.55,132.03 0 0 1 61.45,411.52Z" fill="#7a6600"/>
<path d="M61.9,387.86 A172.1,154.89 0 0 1 406.1,387.86 L406.1,411.17 A172.1,131.58 0 0 1 61.9,411.17Z" fill="#ad9200"/>
<path d="M62.45,387.31 A171.55,154.34 0 0 1 405.55,387.31 L405.55,410.62 A171.55,131.03 0 0 1 62.45,410.62Z" fill="#d0b300"/>
<path d="M63.25,386.61 A170.75,153.54 0 0 1 404.75,386.61 L404.75,409.92 A170.75,130.23 0 0 1 63.25,409.92Z" fill="#e0c300"/>
<path d="M63.89,386.99 A170.11,153.19 0 0 1 404.11,386.99 L404.11,408.26 A170.11,131.92 0 0 1 63.89,408.26Z" fill="none" stroke="#f2d800" stroke-width="1.4"/>
<path d="M64.39,385.99 A169.61,152.69 0 0 1 403.61,385.99 L403.61,407.26 A169.61,131.42 0 0 1 64.39,407.26Z" fill="#7a6600"/>
<path d="M64.84,385.64 A169.16,152.24 0 0 1 403.16,385.64 L403.16,406.91 A169.16,130.97 0 0 1 64.84,406.91Z" fill="#ad9200"/>
<path d="M65.39,385.09 A168.61,151.69 0 0 1 402.61,385.09 L402.61,406.36 A168.61,130.42 0 0 1 65.39,406.36Z" fill="#d0b300"/>
<path d="M66.19,384.39 A167.81,150.89 0 0 1 401.81,384.39 L401.81,405.66 A167.81,129.62 0 0 1 66.19,405.66Z" fill="#e0c300"/>
<path d="M67.13,384.7 A166.87,150.28 0 0 1 400.87,384.7 L400.87,403.88 A166.87,131.1 0 0 1 67.13,403.88Z" fill="none" stroke="#f2d800" stroke-width="1.4"/>
<path d="M67.63,383.7 A166.37,149.78 0 0 1 400.37,383.7 L400.37,402.88 A166.37,130.6 0 0 1 67.63,402.88Z" fill="#7a6600"/>
<path d="M68.08,383.35 A165.92,149.33 0 0 1 399.92,383.35 L399.92,402.53 A165.92,130.15 0 0 1 68.08,402.53Z" fill="#ad9200"/>
<path d="M68.63,382.8 A165.37,148.78 0 0 1 399.37,382.8 L399.37,401.98 A165.37,129.6 0 0 1 68.63,401.98Z" fill="#d0b300"/>
<path d="M69.43,382.1 A164.57,147.98 0 0 1 398.57,382.1 L398.57,401.28 A164.57,128.8 0 0 1 69.43,401.28Z" fill="#e0c300"/>
<path d="M70.66,382.38 A163.34,147.1 0 0 1 397.34,382.38 L397.34,399.44 A163.34,130.04 0 0 1 70.66,399.44Z" fill="none" stroke="#f2d800" stroke-width="1.4"/>
<path d="M71.16,381.38 A162.84,146.6 0 0 1 396.84,381.38 L396.84,398.44 A162.84,129.54 0 0 1 71.16,398.44Z" fill="#7a6600"/>
<path d="M71.61,381.03 A162.39,146.15 0 0 1 396.39,381.03 L396.39,398.09 A162.39,129.09 0 0 1 71.61,398.09Z" fill="#ad9200"/>
<path d="M72.16,380.48 A161.84,145.6 0 0 1 395.84,380.48 L395.84,397.54 A161.84,128.54 0 0 1 72.16,397.54Z" fill="#d0b300"/>
<path d="M72.96,379.78 A161.04,144.8 0 0 1 395.04,379.78 L395.04,396.84 A161.04,127.74 0 0 1 72.96,396.84Z" fill="#e0c300"/>
<path d="M74.43,380.07 A159.57,143.71 0 0 1 393.57,380.07 L393.57,395.03 A159.57,128.74 0 0 1 74.43,395.03Z" fill="none" stroke="#f2d800" stroke-width="1.4"/>
<path d="M74.93,379.07 A159.07,143.21 0 0 1 393.07,379.07 L393.07,394.03 A159.07,128.24 0 0 1 74.93,394.03Z" fill="#7a6600"/>
<path d="M75.38,378.72 A158.62,142.76 0 0 1 392.62,378.72 L392.62,393.68 A158.62,127.79 0 0 1 75.38,393.68Z" fill="#ad9200"/>
<path d="M75.93,378.17 A158.07,142.21 0 0 1 392.07,378.17 L392.07,393.13 A158.07,127.24 0 0 1 75.93,393.13Z" fill="#d0b300"/>
<path d="M76.73,377.47 A157.27,141.41 0 0 1 391.27,377.47 L391.27,392.43 A157.27,126.44 0 0 1 76.73,392.43Z" fill="#e0c300"/>
<path d="M78.36,377.81 A155.64,140.16 0 0 1 389.64,377.81 L389.64,390.75 A155.64,127.23 0 0 1 78.36,390.75Z" fill="none" stroke="#f2d800" stroke-width="1.4"/>
<path d="M78.86,376.81 A155.14,139.66 0 0 1 389.14,376.81 L389.14,389.75 A155.14,126.73 0 0 1 78.86,389.75Z" fill="#7a6600"/>
<path d="M79.31,376.46 A154.69,139.21 0 0 1 388.69,376.46 L388.69,389.4 A154.69,126.28 0 0 1 79.31,389.4Z" fill="#ad9200"/>
<path d="M79.86,375.91 A154.14,138.66 0 0 1 388.14,375.91 L388.14,388.85 A154.14,125.73 0 0 1 79.86,388.85Z" fill="#d0b300"/>
<path d="M80.66,375.21 A153.34,137.86 0 0 1 387.34,375.21 L387.34,388.15 A153.34,124.93 0 0 1 80.66,388.15Z" fill="#e0c300"/>
<path d="M82.54,375.58 A151.46,136.4 0 0 1 385.46,375.58 L385.46,386.52 A151.46,125.46 0 0 1 82.54,386.52Z" fill="none" stroke="#f2d800" stroke-width="1.4"/>
<path d="M83.04,374.58 A150.96,135.9 0 0 1 384.96,374.58 L384.96,385.52 A150.96,124.96 0 0 1 83.04,385.52Z" fill="#7a6600"/>
<path d="M83.49,374.23 A150.51,135.45 0 0 1 384.51,374.23 L384.51,385.17 A150.51,124.51 0 0 1 83.49,385.17Z" fill="#ad9200"/>
<path d="M84.04,373.68 A149.96,134.9 0 0 1 383.96,373.68 L383.96,384.62 A149.96,123.96 0 0 1 84.04,384.62Z" fill="#d0b300"/>
<path d="M84.84,372.98 A149.16,134.1 0 0 1 383.16,372.98 L383.16,383.92 A149.16,123.16 0 0 1 84.84,383.92Z" fill="#e0c300"/>
<path d="M87.05,373.33 A146.95,132.34 0 0 1 380.95,373.33 L380.95,382.3 A146.95,123.38 0 0 1 87.05,382.3Z" fill="none" stroke="#f2d800" stroke-width="1.4"/>
<path d="M87.55,372.33 A146.45,131.84 0 0 1 380.45,372.33 L380.45,381.3 A146.45,122.88 0 0 1 87.55,381.3Z" fill="#7a6600"/>
<path d="M88,371.98 A146,131.39 0 0 1 380,371.98 L380,380.95 A146,122.43 0 0 1 88,380.95Z" fill="#ad9200"/>
<path d="M88.55,371.43 A145.45,130.84 0 0 1 379.45,371.43 L379.45,380.4 A145.45,121.88 0 0 1 88.55,380.4Z" fill="#d0b300"/>
<path d="M89.35,370.73 A144.65,130.04 0 0 1 378.65,370.73 L378.65,379.7 A144.65,121.08 0 0 1 89.35,379.7Z" fill="#e0c300"/>
<path d="M91.81,371.12 A142.19,128.06 0 0 1 376.19,371.12 L376.19,378.17 A142.19,121.01 0 0 1 91.81,378.17Z" fill="none" stroke="#f2d800" stroke-width="1.4"/>
<path d="M92.31,370.12 A141.69,127.56 0 0 1 375.69,370.12 L375.69,377.17 A141.69,120.51 0 0 1 92.31,377.17Z" fill="#7a6600"/>
<path d="M92.76,369.77 A141.24,127.11 0 0 1 375.24,369.77 L375.24,376.82 A141.24,120.06 0 0 1 92.76,376.82Z" fill="#ad9200"/>
<path d="M93.31,369.22 A140.69,126.56 0 0 1 374.69,369.22 L374.69,376.27 A140.69,119.51 0 0 1 93.31,376.27Z" fill="#d0b300"/>
<path d="M94.11,368.52 A139.89,125.76 0 0 1 373.89,368.52 L373.89,375.57 A139.89,118.71 0 0 1 94.11,375.57Z" fill="#e0c300"/>
<path d="M96.98,368.88 A137.02,123.4 0 0 1 371.02,368.88 L371.02,374.03 A137.02,118.24 0 0 1 96.98,374.03Z" fill="none" stroke="#f2d800" stroke-width="1.4"/>
<path d="M97.48,367.88 A136.52,122.9 0 0 1 370.52,367.88 L370.52,373.03 A136.52,117.74 0 0 1 97.48,373.03Z" fill="#7a6600"/>
<path d="M97.93,367.53 A136.07,122.45 0 0 1 370.07,367.53 L370.07,372.68 A136.07,117.29 0 0 1 97.93,372.68Z" fill="#ad9200"/>
<path d="M98.48,366.98 A135.52,121.9 0 0 1 369.52,366.98 L369.52,372.13 A135.52,116.74 0 0 1 98.48,372.13Z" fill="#d0b300"/>
<path d="M99.28,366.28 A134.72,121.1 0 0 1 368.72,366.28 L368.72,371.43 A134.72,115.94 0 0 1 99.28,371.43Z" fill="#e0c300"/>
<path d="M102.52,366.66 A131.48,118.42 0 0 1 365.48,366.66 L365.48,369.98 A131.48,115.09 0 0 1 102.52,369.98Z" fill="none" stroke="#f2d800" stroke-width="1.4"/>
<path d="M103.02,365.66 A130.98,117.92 0 0 1 364.98,365.66 L364.98,368.98 A130.98,114.59 0 0 1 103.02,368.98Z" fill="#7a6600"/>
<path d="M103.47,365.31 A130.53,117.47 0 0 1 364.53,365.31 L364.53,368.63 A130.53,114.14 0 0 1 103.47,368.63Z" fill="#ad9200"/>
<path d="M104.02,364.76 A129.98,116.92 0 0 1 363.98,364.76 L363.98,368.08 A129.98,113.59 0 0 1 104.02,368.08Z" fill="#d0b300"/>
<path d="M104.82,364.06 A129.18,116.12 0 0 1 363.18,364.06 L363.18,367.38 A129.18,112.79 0 0 1 104.82,367.38Z" fill="#e0c300"/>
<path d="M108.41,364.47 A125.59,113.11 0 0 1 359.59,364.47 L359.59,366.05 A125.59,111.53 0 0 1 108.41,366.05Z" fill="none" stroke="#f2d800" stroke-width="1.4"/>
<path d="M108.91,363.47 A125.09,112.61 0 0 1 359.09,363.47 L359.09,365.05 A125.09,111.03 0 0 1 108.91,365.05Z" fill="#7a6600"/>
<path d="M109.36,363.12 A124.64,112.16 0 0 1 358.64,363.12 L358.64,364.7 A124.64,110.58 0 0 1 109.36,364.7Z" fill="#ad9200"/>
<path d="M109.91,362.57 A124.09,111.61 0 0 1 358.09,362.57 L358.09,364.15 A124.09,110.03 0 0 1 109.91,364.15Z" fill="#d0b300"/>
<path d="M110.71,361.87 A123.29,110.81 0 0 1 357.29,361.87 L357.29,363.45 A123.29,109.23 0 0 1 110.71,363.45Z" fill="#e0c300"/>
<path d="M114.45,362.4 A119.55,107.68 0 0 1 353.55,362.4 L353.55,362.4 A119.55,107.68 0 0 1 114.45,362.4Z" fill="none" stroke="#f2d800" stroke-width="1.4"/>
<path d="M114.95,361.4 A119.05,107.18 0 0 1 353.05,361.4 L353.05,361.4 A119.05,107.18 0 0 1 114.95,361.4Z" fill="#7a6600"/>
<path d="M115.4,361.05 A118.6,106.73 0 0 1 352.6,361.05 L352.6,361.05 A118.6,106.73 0 0 1 115.4,361.05Z" fill="#ad9200"/>
<path d="M115.95,360.5 A118.05,106.18 0 0 1 352.05,360.5 L352.05,360.5 A118.05,106.18 0 0 1 115.95,360.5Z" fill="#d0b300"/>
<path d="M116.75,359.8 A117.25,105.38 0 0 1 351.25,359.8 L351.25,359.8 A117.25,105.38 0 0 1 116.75,359.8Z" fill="#e0c300"/>
<path d="M114.95,361.4 A119.05,107.18 0 0 1 353.05,361.4 L353.05,361.4 A119.05,107.18 0 0 1 114.95,361.4Z" fill="#7a6600"/>
<path d="M115.4,361.05 A118.6,106.73 0 0 1 352.6,361.05 L352.6,361.05 A118.6,106.73 0 0 1 115.4,361.05Z" fill="#ad9200"/>
<path d="M115.95,360.5 A118.05,106.18 0 0 1 352.05,360.5 L352.05,360.5 A118.05,106.18 0 0 1 115.95,360.5Z" fill="#d0b300"/>
<path d="M116.75,359.8 A117.25,105.38 0 0 1 351.25,359.8 L351.25,359.8 A117.25,105.38 0 0 1 116.75,359.8Z" fill="#e0c300"/>
<path d="M122.7,361.4 A112.1,100.1 0 0 1 346.9,361.4 L346.9,361.4 A112.1,100.1 0 0 1 122.7,361.4Z" fill="none" stroke="#f2d800" stroke-width="1.4"/>
<path d="M123.2,360.4 A111.6,99.6 0 0 1 346.4,360.4 L346.4,360.4 A111.6,99.6 0 0 1 123.2,360.4Z" fill="#7a6600"/>
<path d="M123.65,360.05 A111.15,99.15 0 0 1 345.95,360.05 L345.95,360.05 A111.15,99.15 0 0 1 123.65,360.05Z" fill="#ad9200"/>
<path d="M124.2,359.5 A110.6,98.6 0 0 1 345.4,359.5 L345.4,359.5 A110.6,98.6 0 0 1 124.2,359.5Z" fill="#d0b300"/>
<path d="M125,358.8 A109.8,97.8 0 0 1 344.6,358.8 L344.6,358.8 A109.8,97.8 0 0 1 125,358.8Z" fill="#e0c300"/>
<radialGradient id="rimBig" gradientUnits="userSpaceOnUse" cx="215" cy="445" r="235" fx="215" fy="445"><stop offset="0.62" stop-color="#3a3000" stop-opacity="0"/><stop offset="0.88" stop-color="#3a3000" stop-opacity="0.22"/><stop offset="1" stop-color="#3a3000" stop-opacity="0.4"/></radialGradient>
<rect x="20" y="220" width="430" height="400" fill="url(#rimBig)"/>
</g>
<ellipse cx="235.2" cy="360.2" rx="104" ry="92" fill="url(#pinkHatch)"/>
<ellipse cx="236.5" cy="361.5" rx="68.5" ry="61" fill="url(#pinkStripe)"/>
<g stroke-linecap="round">
<line x1="181.5" y1="361.8" x2="291" y2="331.3" stroke="#8a3a3a" stroke-width="8"/>
<line x1="181.5" y1="361.8" x2="291" y2="331.3" stroke="#c45454" stroke-width="6.4"/>
<line x1="181.5" y1="361.8" x2="291" y2="331.3" stroke="#e87272" stroke-width="2.8"/>
<line x1="175.3" y1="392.3" x2="278.5" y2="383.4" stroke="#8a3a3a" stroke-width="8"/>
<line x1="175.3" y1="392.3" x2="278.5" y2="383.4" stroke="#c45454" stroke-width="6.4"/>
<line x1="175.3" y1="392.3" x2="278.5" y2="383.4" stroke="#e87272" stroke-width="2.8"/>
<line x1="219" y1="361.8" x2="240.8" y2="406.7" stroke="#8a3a3a" stroke-width="8"/>
<line x1="219" y1="361.8" x2="240.8" y2="406.7" stroke="#c45454" stroke-width="6.4"/>
<line x1="219" y1="361.8" x2="240.8" y2="406.7" stroke="#e87272" stroke-width="2.8"/>
<line x1="213.9" y1="306.2" x2="171.7" y2="374.4" stroke="#8a3a3a" stroke-width="8"/>
<line x1="213.9" y1="306.2" x2="171.7" y2="374.4" stroke="#c45454" stroke-width="6.4"/>
<line x1="213.9" y1="306.2" x2="171.7" y2="374.4" stroke="#e87272" stroke-width="2.8"/>
<line x1="171.7" y1="374.4" x2="179.7" y2="390.5" stroke="#8a3a3a" stroke-width="8"/>
<line x1="171.7" y1="374.4" x2="179.7" y2="390.5" stroke="#c45454" stroke-width="6.4"/>
<line x1="171.7" y1="374.4" x2="179.7" y2="390.5" stroke="#e87272" stroke-width="2.8"/>
<line x1="217.5" y1="304.4" x2="210.3" y2="413.9" stroke="#8a3a3a" stroke-width="8"/>
<line x1="217.5" y1="304.4" x2="210.3" y2="413.9" stroke="#c45454" stroke-width="6.4"/>
<line x1="217.5" y1="304.4" x2="210.3" y2="413.9" stroke="#e87272" stroke-width="2.8"/>
<line x1="248" y1="304.4" x2="289.3" y2="394.1" stroke="#8a3a3a" stroke-width="8"/>
<line x1="248" y1="304.4" x2="289.3" y2="394.1" stroke="#c45454" stroke-width="6.4"/>
<line x1="248" y1="304.4" x2="289.3" y2="394.1" stroke="#e87272" stroke-width="2.8"/>
<line x1="210.3" y1="413.9" x2="289.3" y2="394.1" stroke="#8a3a3a" stroke-width="8"/>
<line x1="210.3" y1="413.9" x2="289.3" y2="394.1" stroke="#c45454" stroke-width="6.4"/>
<line x1="210.3" y1="413.9" x2="289.3" y2="394.1" stroke="#e87272" stroke-width="2.8"/>
<line x1="219" y1="304" x2="248" y2="304" stroke="#8a3a3a" stroke-width="8"/>
<line x1="219" y1="304" x2="248" y2="304" stroke="#c45454" stroke-width="6.4"/>
<line x1="219" y1="304" x2="248" y2="304" stroke="#e87272" stroke-width="2.8"/>
</g>
<g clip-path="url(#cSmall)">
<path d="M440,395.5 C450.55,396.62 463.3,402.07 473.3,406.7 C483.3,411.33 492.22,417.2 500,423.3 C507.78,429.4 514.45,436.07 520,443.3 C525.55,450.53 529.42,457.8 533.3,466.7 C537.18,475.6 541.07,487.27 543.3,496.7 C545.53,506.13 546.42,514.42 546.7,523.3 C546.98,532.18 546.67,541.1 545,550 C543.33,558.9 540.87,567.82 536.7,576.7 C532.53,585.58 526.67,594.97 520,603.3 C513.33,611.63 504.48,620.58 496.7,626.7 C488.92,632.82 482.2,636.87 473.3,640 C464.4,643.13 453.85,644.83 443.3,645.5 C432.75,646.17 421.1,646.08 410,644 C398.9,641.92 387.25,637.55 376.7,633 C366.15,628.45 354.32,622.03 346.7,616.7 C339.08,611.37 334.9,606 331,601 C327.1,596 324.22,594.65 323.3,586.7 C322.38,578.75 323.88,564.97 325.5,553.3 C327.12,541.63 330.25,527.8 333,516.7 C335.75,505.6 338.75,496.7 342,486.7 C345.25,476.7 348.38,466.15 352.5,456.7 C356.62,447.25 361,437.78 366.7,430 C372.4,422.22 379.48,415 386.7,410 C393.92,405 401.12,402.42 410,400 C418.88,397.58 429.45,394.38 440,395.5Z" fill="#b89d00"/>
<path d="M310,530.31 A122,115.4 0 0 1 554,530.31 L554,550.55 A122,95.16 0 0 1 310,550.55Z" fill="#7a6600"/>
<path d="M310.45,529.96 A121.55,114.95 0 0 1 553.55,529.96 L553.55,550.2 A121.55,94.71 0 0 1 310.45,550.2Z" fill="#ad9200"/>
<path d="M311,529.41 A121,114.4 0 0 1 553,529.41 L553,549.65 A121,94.16 0 0 1 311,549.65Z" fill="#d0b300"/>
<path d="M311.8,528.71 A120.2,113.6 0 0 1 552.2,528.71 L552.2,548.95 A120.2,93.36 0 0 1 311.8,548.95Z" fill="#e0c300"/>
<path d="M309.48,530.74 A122.5,115.9 0 0 1 554.47,530.74 L554.47,550.8 A122.5,95.83 0 0 1 309.48,550.8Z" fill="none" stroke="#f2d800" stroke-width="1.4"/>
<path d="M309.98,529.74 A122,115.4 0 0 1 553.97,529.74 L553.97,549.8 A122,95.33 0 0 1 309.98,549.8Z" fill="#7a6600"/>
<path d="M310.43,529.39 A121.55,114.95 0 0 1 553.52,529.39 L553.52,549.45 A121.55,94.88 0 0 1 310.43,549.45Z" fill="#ad9200"/>
<path d="M310.98,528.84 A121,114.4 0 0 1 552.97,528.84 L552.97,548.9 A121,94.33 0 0 1 310.98,548.9Z" fill="#d0b300"/>
<path d="M311.78,528.14 A120.2,113.6 0 0 1 552.17,528.14 L552.17,548.2 A120.2,93.53 0 0 1 311.78,548.2Z" fill="#e0c300"/>
<path d="M309.49,527.51 A122.31,115.72 0 0 1 554.12,527.51 L554.12,546.56 A122.31,96.68 0 0 1 309.49,546.56Z" fill="none" stroke="#f2d800" stroke-width="1.4"/>
<path d="M309.99,526.51 A121.81,115.22 0 0 1 553.62,526.51 L553.62,545.56 A121.81,96.18 0 0 1 309.99,545.56Z" fill="#7a6600"/>
<path d="M310.44,526.16 A121.36,114.77 0 0 1 553.17,526.16 L553.17,545.21 A121.36,95.73 0 0 1 310.44,545.21Z" fill="#ad9200"/>
<path d="M310.99,525.61 A120.81,114.22 0 0 1 552.62,525.61 L552.62,544.66 A120.81,95.18 0 0 1 310.99,544.66Z" fill="#d0b300"/>
<path d="M311.79,524.91 A120.01,113.42 0 0 1 551.82,524.91 L551.82,543.96 A120.01,94.38 0 0 1 311.79,543.96Z" fill="#e0c300"/>
<path d="M309.76,524.44 A121.89,115.32 0 0 1 553.54,524.44 L553.54,542.49 A121.89,97.26 0 0 1 309.76,542.49Z" fill="none" stroke="#f2d800" stroke-width="1.4"/>
<path d="M310.26,523.44 A121.39,114.82 0 0 1 553.04,523.44 L553.04,541.49 A121.39,96.76 0 0 1 310.26,541.49Z" fill="#7a6600"/>
<path d="M310.71,523.09 A120.94,114.37 0 0 1 552.59,523.09 L552.59,541.14 A120.94,96.31 0 0 1 310.71,541.14Z" fill="#ad9200"/>
<path d="M311.26,522.54 A120.39,113.82 0 0 1 552.04,522.54 L552.04,540.59 A120.39,95.76 0 0 1 311.26,540.59Z" fill="#d0b300"/>
<path d="M312.06,521.84 A119.59,113.02 0 0 1 551.24,521.84 L551.24,539.89 A119.59,94.96 0 0 1 312.06,539.89Z" fill="#e0c300"/>
<path d="M310.26,521.46 A121.24,114.71 0 0 1 552.73,521.46 L552.73,538.54 A121.24,97.62 0 0 1 310.26,538.54Z" fill="none" stroke="#f2d800" stroke-width="1.4"/>
<path d="M310.76,520.46 A120.74,114.21 0 0 1 552.23,520.46 L552.23,537.54 A120.74,97.12 0 0 1 310.76,537.54Z" fill="#7a6600"/>
<path d="M311.21,520.11 A120.29,113.76 0 0 1 551.78,520.11 L551.78,537.19 A120.29,96.67 0 0 1 311.21,537.19Z" fill="#ad9200"/>
<path d="M311.76,519.56 A119.74,113.21 0 0 1 551.23,519.56 L551.23,536.64 A119.74,96.12 0 0 1 311.76,536.64Z" fill="#d0b300"/>
<path d="M312.56,518.86 A118.94,112.41 0 0 1 550.43,518.86 L550.43,535.94 A118.94,95.32 0 0 1 312.56,535.94Z" fill="#e0c300"/>
<path d="M310.97,518.57 A120.38,113.9 0 0 1 551.73,518.57 L551.73,534.69 A120.38,97.77 0 0 1 310.97,534.69Z" fill="none" stroke="#f2d800" stroke-width="1.4"/>
<path d="M311.47,517.57 A119.88,113.4 0 0 1 551.23,517.57 L551.23,533.69 A119.88,97.27 0 0 1 311.47,533.69Z" fill="#7a6600"/>
<path d="M311.92,517.22 A119.43,112.95 0 0 1 550.78,517.22 L550.78,533.34 A119.43,96.82 0 0 1 311.92,533.34Z" fill="#ad9200"/>
<path d="M312.47,516.67 A118.88,112.4 0 0 1 550.23,516.67 L550.23,532.79 A118.88,96.27 0 0 1 312.47,532.79Z" fill="#d0b300"/>
<path d="M313.27,515.97 A118.08,111.6 0 0 1 549.43,515.97 L549.43,532.09 A118.08,95.47 0 0 1 313.27,532.09Z" fill="#e0c300"/>
<path d="M311.87,515.75 A119.33,112.9 0 0 1 550.53,515.75 L550.53,530.93 A119.33,97.72 0 0 1 311.87,530.93Z" fill="none" stroke="#f2d800" stroke-width="1.4"/>
<path d="M312.37,514.75 A118.83,112.4 0 0 1 550.03,514.75 L550.03,529.93 A118.83,97.22 0 0 1 312.37,529.93Z" fill="#7a6600"/>
<path d="M312.82,514.4 A118.38,111.95 0 0 1 549.58,514.4 L549.58,529.58 A118.38,96.77 0 0 1 312.82,529.58Z" fill="#ad9200"/>
<path d="M313.37,513.85 A117.83,111.4 0 0 1 549.03,513.85 L549.03,529.03 A117.83,96.22 0 0 1 313.37,529.03Z" fill="#d0b300"/>
<path d="M314.17,513.15 A117.03,110.6 0 0 1 548.23,513.15 L548.23,528.33 A117.03,95.42 0 0 1 314.17,528.33Z" fill="#e0c300"/>
<path d="M312.97,512.99 A118.08,111.72 0 0 1 549.14,512.99 L549.14,527.25 A118.08,97.47 0 0 1 312.97,527.25Z" fill="none" stroke="#f2d800" stroke-width="1.4"/>
<path d="M313.47,511.99 A117.58,111.22 0 0 1 548.64,511.99 L548.64,526.25 A117.58,96.97 0 0 1 313.47,526.25Z" fill="#7a6600"/>
<path d="M313.92,511.64 A117.13,110.77 0 0 1 548.19,511.64 L548.19,525.9 A117.13,96.52 0 0 1 313.92,525.9Z" fill="#ad9200"/>
<path d="M314.47,511.09 A116.58,110.22 0 0 1 547.64,511.09 L547.64,525.35 A116.58,95.97 0 0 1 314.47,525.35Z" fill="#d0b300"/>
<path d="M315.27,510.39 A115.78,109.42 0 0 1 546.84,510.39 L546.84,524.65 A115.78,95.17 0 0 1 315.27,524.65Z" fill="#e0c300"/>
<path d="M314.26,510.29 A116.65,110.37 0 0 1 547.56,510.29 L547.56,523.63 A116.65,97.03 0 0 1 314.26,523.63Z" fill="none" stroke="#f2d800" stroke-width="1.4"/>
<path d="M314.76,509.29 A116.15,109.87 0 0 1 547.06,509.29 L547.06,522.63 A116.15,96.53 0 0 1 314.76,522.63Z" fill="#7a6600"/>
<path d="M315.21,508.94 A115.7,109.42 0 0 1 546.61,508.94 L546.61,522.28 A115.7,96.08 0 0 1 315.21,522.28Z" fill="#ad9200"/>
<path d="M315.76,508.39 A115.15,108.87 0 0 1 546.06,508.39 L546.06,521.73 A115.15,95.53 0 0 1 315.76,521.73Z" fill="#d0b300"/>
<path d="M316.56,507.69 A114.35,108.07 0 0 1 545.26,507.69 L545.26,521.03 A114.35,94.73 0 0 1 316.56,521.03Z" fill="#e0c300"/>
<path d="M315.74,507.64 A115.03,108.84 0 0 1 545.8,507.64 L545.8,520.08 A115.03,96.4 0 0 1 315.74,520.08Z" fill="none" stroke="#f2d800" stroke-width="1.4"/>
<path d="M316.24,506.64 A114.53,108.34 0 0 1 545.3,506.64 L545.3,519.08 A114.53,95.9 0 0 1 316.24,519.08Z" fill="#7a6600"/>
<path d="M316.69,506.29 A114.08,107.89 0 0 1 544.85,506.29 L544.85,518.73 A114.08,95.45 0 0 1 316.69,518.73Z" fill="#ad9200"/>
<path d="M317.24,505.74 A113.53,107.34 0 0 1 544.3,505.74 L544.3,518.18 A113.53,94.9 0 0 1 317.24,518.18Z" fill="#d0b300"/>
<path d="M318.04,505.04 A112.73,106.54 0 0 1 543.5,505.04 L543.5,517.48 A112.73,94.1 0 0 1 318.04,517.48Z" fill="#e0c300"/>
<path d="M317.4,505.04 A113.23,107.13 0 0 1 543.85,505.04 L543.85,516.6 A113.23,95.57 0 0 1 317.4,516.6Z" fill="none" stroke="#f2d800" stroke-width="1.4"/>
<path d="M317.9,504.04 A112.73,106.63 0 0 1 543.35,504.04 L543.35,515.6 A112.73,95.07 0 0 1 317.9,515.6Z" fill="#7a6600"/>
<path d="M318.35,503.69 A112.28,106.18 0 0 1 542.9,503.69 L542.9,515.25 A112.28,94.62 0 0 1 318.35,515.25Z" fill="#ad9200"/>
<path d="M318.9,503.14 A111.73,105.63 0 0 1 542.35,503.14 L542.35,514.7 A111.73,94.07 0 0 1 318.9,514.7Z" fill="#d0b300"/>
<path d="M319.7,502.44 A110.93,104.83 0 0 1 541.55,502.44 L541.55,514 A110.93,93.27 0 0 1 319.7,514Z" fill="#e0c300"/>
<path d="M319.25,502.48 A111.24,105.25 0 0 1 541.72,502.48 L541.72,513.17 A111.24,94.56 0 0 1 319.25,513.17Z" fill="none" stroke="#f2d800" stroke-width="1.4"/>
<path d="M319.75,501.48 A110.74,104.75 0 0 1 541.22,501.48 L541.22,512.17 A110.74,94.06 0 0 1 319.75,512.17Z" fill="#7a6600"/>
<path d="M320.2,501.13 A110.29,104.3 0 0 1 540.77,501.13 L540.77,511.82 A110.29,93.61 0 0 1 320.2,511.82Z" fill="#ad9200"/>
<path d="M320.75,500.58 A109.74,103.75 0 0 1 540.22,500.58 L540.22,511.27 A109.74,93.06 0 0 1 320.75,511.27Z" fill="#d0b300"/>
<path d="M321.55,499.88 A108.94,102.95 0 0 1 539.42,499.88 L539.42,510.57 A108.94,92.26 0 0 1 321.55,510.57Z" fill="#e0c300"/>
<path d="M321.29,499.96 A109.06,103.18 0 0 1 539.4,499.96 L539.4,509.81 A109.06,93.34 0 0 1 321.29,509.81Z" fill="none" stroke="#f2d800" stroke-width="1.4"/>
<path d="M321.79,498.96 A108.56,102.68 0 0 1 538.9,498.96 L538.9,508.81 A108.56,92.84 0 0 1 321.79,508.81Z" fill="#7a6600"/>
<path d="M322.24,498.61 A108.11,102.23 0 0 1 538.45,498.61 L538.45,508.46 A108.11,92.39 0 0 1 322.24,508.46Z" fill="#ad9200"/>
<path d="M322.79,498.06 A107.56,101.68 0 0 1 537.9,498.06 L537.9,507.91 A107.56,91.84 0 0 1 322.79,507.91Z" fill="#d0b300"/>
<path d="M323.59,497.36 A106.76,100.88 0 0 1 537.1,497.36 L537.1,507.21 A106.76,91.04 0 0 1 323.59,507.21Z" fill="#e0c300"/>
<path d="M323.52,497.48 A106.68,100.94 0 0 1 536.88,497.48 L536.88,506.5 A106.68,91.92 0 0 1 323.52,506.5Z" fill="none" stroke="#f2d800" stroke-width="1.4"/>
<path d="M324.02,496.48 A106.18,100.44 0 0 1 536.38,496.48 L536.38,505.5 A106.18,91.42 0 0 1 324.02,505.5Z" fill="#7a6600"/>
<path d="M324.47,496.13 A105.73,99.99 0 0 1 535.93,496.13 L535.93,505.15 A105.73,90.97 0 0 1 324.47,505.15Z" fill="#ad9200"/>
<path d="M325.02,495.58 A105.18,99.44 0 0 1 535.38,495.58 L535.38,504.6 A105.18,90.42 0 0 1 325.02,504.6Z" fill="#d0b300"/>
<path d="M325.82,494.88 A104.38,98.64 0 0 1 534.58,494.88 L534.58,503.9 A104.38,89.62 0 0 1 325.82,503.9Z" fill="#e0c300"/>
<path d="M325.94,495.05 A104.11,98.51 0 0 1 534.17,495.05 L534.17,503.25 A104.11,90.3 0 0 1 325.94,503.25Z" fill="none" stroke="#f2d800" stroke-width="1.4"/>
<path d="M326.44,494.05 A103.61,98.01 0 0 1 533.67,494.05 L533.67,502.25 A103.61,89.8 0 0 1 326.44,502.25Z" fill="#7a6600"/>
<path d="M326.89,493.7 A103.16,97.56 0 0 1 533.22,493.7 L533.22,501.9 A103.16,89.35 0 0 1 326.89,501.9Z" fill="#ad9200"/>
<path d="M327.44,493.15 A102.61,97.01 0 0 1 532.67,493.15 L532.67,501.35 A102.61,88.8 0 0 1 327.44,501.35Z" fill="#d0b300"/>
<path d="M328.24,492.45 A101.81,96.21 0 0 1 531.87,492.45 L531.87,500.65 A101.81,88 0 0 1 328.24,500.65Z" fill="#e0c300"/>
<path d="M328.57,492.65 A101.34,95.89 0 0 1 531.25,492.65 L531.25,500.07 A101.34,88.46 0 0 1 328.57,500.07Z" fill="none" stroke="#f2d800" stroke-width="1.4"/>
<path d="M329.07,491.65 A100.84,95.39 0 0 1 530.75,491.65 L530.75,499.07 A100.84,87.96 0 0 1 329.07,499.07Z" fill="#7a6600"/>
<path d="M329.52,491.3 A100.39,94.94 0 0 1 530.3,491.3 L530.3,498.72 A100.39,87.51 0 0 1 329.52,498.72Z" fill="#ad9200"/>
<path d="M330.07,490.75 A99.84,94.39 0 0 1 529.75,490.75 L529.75,498.17 A99.84,86.96 0 0 1 330.07,498.17Z" fill="#d0b300"/>
<path d="M330.87,490.05 A99.04,93.59 0 0 1 528.95,490.05 L528.95,497.47 A99.04,86.16 0 0 1 330.87,497.47Z" fill="#e0c300"/>
<path d="M331.4,490.29 A98.36,93.07 0 0 1 528.13,490.29 L528.13,496.96 A98.36,86.41 0 0 1 331.4,496.96Z" fill="none" stroke="#f2d800" stroke-width="1.4"/>
<path d="M331.9,489.29 A97.86,92.57 0 0 1 527.63,489.29 L527.63,495.96 A97.86,85.91 0 0 1 331.9,495.96Z" fill="#7a6600"/>
<path d="M332.35,488.94 A97.41,92.12 0 0 1 527.18,488.94 L527.18,495.61 A97.41,85.46 0 0 1 332.35,495.61Z" fill="#ad9200"/>
<path d="M332.9,488.39 A96.86,91.57 0 0 1 526.63,488.39 L526.63,495.06 A96.86,84.91 0 0 1 332.9,495.06Z" fill="#d0b300"/>
<path d="M333.7,487.69 A96.06,90.77 0 0 1 525.83,487.69 L525.83,494.36 A96.06,84.11 0 0 1 333.7,494.36Z" fill="#e0c300"/>
<path d="M334.44,487.98 A95.17,90.05 0 0 1 524.78,487.98 L524.78,493.91 A95.17,84.12 0 0 1 334.44,493.91Z" fill="none" stroke="#f2d800" stroke-width="1.4"/>
<path d="M334.94,486.98 A94.67,89.55 0 0 1 524.28,486.98 L524.28,492.91 A94.67,83.62 0 0 1 334.94,492.91Z" fill="#7a6600"/>
<path d="M335.39,486.63 A94.22,89.1 0 0 1 523.83,486.63 L523.83,492.56 A94.22,83.17 0 0 1 335.39,492.56Z" fill="#ad9200"/>
<path d="M335.94,486.08 A93.67,88.55 0 0 1 523.28,486.08 L523.28,492.01 A93.67,82.62 0 0 1 335.94,492.01Z" fill="#d0b300"/>
<path d="M336.74,485.38 A92.87,87.75 0 0 1 522.48,485.38 L522.48,491.31 A92.87,81.82 0 0 1 336.74,491.31Z" fill="#e0c300"/>
<path d="M337.71,485.71 A91.75,86.81 0 0 1 521.21,485.71 L521.21,490.94 A91.75,81.59 0 0 1 337.71,490.94Z" fill="none" stroke="#f2d800" stroke-width="1.4"/>
<path d="M338.21,484.71 A91.25,86.31 0 0 1 520.71,484.71 L520.71,489.94 A91.25,81.09 0 0 1 338.21,489.94Z" fill="#7a6600"/>
<path d="M338.66,484.36 A90.8,85.86 0 0 1 520.26,484.36 L520.26,489.59 A90.8,80.64 0 0 1 338.66,489.59Z" fill="#ad9200"/>
<path d="M339.21,483.81 A90.25,85.31 0 0 1 519.71,483.81 L519.71,489.04 A90.25,80.09 0 0 1 339.21,489.04Z" fill="#d0b300"/>
<path d="M340.01,483.11 A89.45,84.51 0 0 1 518.91,483.11 L518.91,488.34 A89.45,79.29 0 0 1 340.01,488.34Z" fill="#e0c300"/>
<path d="M341.21,483.5 A88.1,83.36 0 0 1 517.41,483.5 L517.41,488.05 A88.1,78.81 0 0 1 341.21,488.05Z" fill="none" stroke="#f2d800" stroke-width="1.4"/>
<path d="M341.71,482.5 A87.6,82.86 0 0 1 516.91,482.5 L516.91,487.05 A87.6,78.31 0 0 1 341.71,487.05Z" fill="#7a6600"/>
<path d="M342.16,482.15 A87.15,82.41 0 0 1 516.46,482.15 L516.46,486.7 A87.15,77.86 0 0 1 342.16,486.7Z" fill="#ad9200"/>
<path d="M342.71,481.6 A86.6,81.86 0 0 1 515.91,481.6 L515.91,486.15 A86.6,77.31 0 0 1 342.71,486.15Z" fill="#d0b300"/>
<path d="M343.51,480.9 A85.8,81.06 0 0 1 515.11,480.9 L515.11,485.45 A85.8,76.51 0 0 1 343.51,485.45Z" fill="#e0c300"/>
<path d="M344.94,481.34 A84.21,79.68 0 0 1 513.36,481.34 L513.36,485.25 A84.21,75.76 0 0 1 344.94,485.25Z" fill="none" stroke="#f2d800" stroke-width="1.4"/>
<path d="M345.44,480.34 A83.71,79.18 0 0 1 512.86,480.34 L512.86,484.25 A83.71,75.26 0 0 1 345.44,484.25Z" fill="#7a6600"/>
<path d="M345.89,479.99 A83.26,78.73 0 0 1 512.41,479.99 L512.41,483.9 A83.26,74.81 0 0 1 345.89,483.9Z" fill="#ad9200"/>
<path d="M346.44,479.44 A82.71,78.18 0 0 1 511.86,479.44 L511.86,483.35 A82.71,74.26 0 0 1 346.44,483.35Z" fill="#d0b300"/>
<path d="M347.24,478.74 A81.91,77.38 0 0 1 511.06,478.74 L511.06,482.65 A81.91,73.46 0 0 1 347.24,482.65Z" fill="#e0c300"/>
<path d="M348.93,479.23 A80.06,75.76 0 0 1 509.05,479.23 L509.05,482.55 A80.06,72.44 0 0 1 348.93,482.55Z" fill="none" stroke="#f2d800" stroke-width="1.4"/>
<path d="M349.43,478.23 A79.56,75.26 0 0 1 508.55,478.23 L508.55,481.55 A79.56,71.94 0 0 1 349.43,481.55Z" fill="#7a6600"/>
<path d="M349.88,477.88 A79.11,74.81 0 0 1 508.1,477.88 L508.1,481.2 A79.11,71.49 0 0 1 349.88,481.2Z" fill="#ad9200"/>
<path d="M350.43,477.33 A78.56,74.26 0 0 1 507.55,477.33 L507.55,480.65 A78.56,70.94 0 0 1 350.43,480.65Z" fill="#d0b300"/>
<path d="M351.23,476.63 A77.76,73.46 0 0 1 506.75,476.63 L506.75,479.95 A77.76,70.14 0 0 1 351.23,479.95Z" fill="#e0c300"/>
<path d="M353.18,477.19 A75.65,71.58 0 0 1 504.48,477.19 L504.48,479.95 A75.65,68.83 0 0 1 353.18,479.95Z" fill="none" stroke="#f2d800" stroke-width="1.4"/>
<path d="M353.68,476.19 A75.15,71.08 0 0 1 503.98,476.19 L503.98,478.95 A75.15,68.33 0 0 1 353.68,478.95Z" fill="#7a6600"/>
<path d="M354.13,475.84 A74.7,70.63 0 0 1 503.53,475.84 L503.53,478.6 A74.7,67.88 0 0 1 354.13,478.6Z" fill="#ad9200"/>
<path d="M354.68,475.29 A74.15,70.08 0 0 1 502.98,475.29 L502.98,478.05 A74.15,67.33 0 0 1 354.68,478.05Z" fill="#d0b300"/>
<path d="M355.48,474.59 A73.35,69.28 0 0 1 502.18,474.59 L502.18,477.35 A73.35,66.53 0 0 1 355.48,477.35Z" fill="#e0c300"/>
<path d="M357.7,475.23 A70.96,67.15 0 0 1 499.62,475.23 L499.62,477.46 A70.96,64.91 0 0 1 357.7,477.46Z" fill="none" stroke="#f2d800" stroke-width="1.4"/>
<path d="M358.2,474.23 A70.46,66.65 0 0 1 499.12,474.23 L499.12,476.46 A70.46,64.41 0 0 1 358.2,476.46Z" fill="#7a6600"/>
<path d="M358.65,473.88 A70.01,66.2 0 0 1 498.67,473.88 L498.67,476.11 A70.01,63.96 0 0 1 358.65,476.11Z" fill="#ad9200"/>
<path d="M359.2,473.33 A69.46,65.65 0 0 1 498.12,473.33 L498.12,475.56 A69.46,63.41 0 0 1 359.2,475.56Z" fill="#d0b300"/>
<path d="M360,472.63 A68.66,64.85 0 0 1 497.32,472.63 L497.32,474.86 A68.66,62.61 0 0 1 360,474.86Z" fill="#e0c300"/>
<path d="M362.96,473.18 A65.51,61.99 0 0 1 493.98,473.18 L493.98,474.9 A65.51,60.27 0 0 1 362.96,474.9Z" fill="none" stroke="#f2d800" stroke-width="1.4"/>
<path d="M363.46,472.18 A65.01,61.49 0 0 1 493.48,472.18 L493.48,473.9 A65.01,59.77 0 0 1 363.46,473.9Z" fill="#7a6600"/>
<path d="M363.91,471.83 A64.56,61.04 0 0 1 493.03,471.83 L493.03,473.55 A64.56,59.32 0 0 1 363.91,473.55Z" fill="#ad9200"/>
<path d="M364.46,471.28 A64.01,60.49 0 0 1 492.48,471.28 L492.48,473 A64.01,58.77 0 0 1 364.46,473Z" fill="#d0b300"/>
<path d="M365.26,470.58 A63.21,59.69 0 0 1 491.68,470.58 L491.68,472.3 A63.21,57.97 0 0 1 365.26,472.3Z" fill="#e0c300"/>
<path d="M369.01,471.1 A59.25,56.07 0 0 1 487.51,471.1 L487.51,472.34 A59.25,54.83 0 0 1 369.01,472.34Z" fill="none" stroke="#f2d800" stroke-width="1.4"/>
<path d="M369.51,470.1 A58.75,55.57 0 0 1 487.01,470.1 L487.01,471.34 A58.75,54.33 0 0 1 369.51,471.34Z" fill="#7a6600"/>
<path d="M369.96,469.75 A58.3,55.12 0 0 1 486.56,469.75 L486.56,470.99 A58.3,53.88 0 0 1 369.96,470.99Z" fill="#ad9200"/>
<path d="M370.51,469.2 A57.75,54.57 0 0 1 486.01,469.2 L486.01,470.44 A57.75,53.33 0 0 1 370.51,470.44Z" fill="#d0b300"/>
<path d="M371.31,468.5 A56.95,53.77 0 0 1 485.21,468.5 L485.21,469.74 A56.95,52.53 0 0 1 371.31,469.74Z" fill="#e0c300"/>
<path d="M375.37,469.21 A52.68,49.86 0 0 1 480.73,469.21 L480.73,470.05 A52.68,49.03 0 0 1 375.37,470.05Z" fill="none" stroke="#f2d800" stroke-width="1.4"/>
<path d="M375.87,468.21 A52.18,49.36 0 0 1 480.23,468.21 L480.23,469.05 A52.18,48.53 0 0 1 375.87,469.05Z" fill="#7a6600"/>
<path d="M376.32,467.86 A51.73,48.91 0 0 1 479.78,467.86 L479.78,468.7 A51.73,48.08 0 0 1 376.32,468.7Z" fill="#ad9200"/>
<path d="M376.87,467.31 A51.18,48.36 0 0 1 479.23,467.31 L479.23,468.15 A51.18,47.53 0 0 1 376.87,468.15Z" fill="#d0b300"/>
<path d="M377.67,466.61 A50.38,47.56 0 0 1 478.43,466.61 L478.43,467.45 A50.38,46.73 0 0 1 377.67,467.45Z" fill="#e0c300"/>
<path d="M382.2,467.49 A45.63,43.19 0 0 1 473.46,467.49 L473.46,467.99 A45.63,42.68 0 0 1 382.2,467.99Z" fill="none" stroke="#f2d800" stroke-width="1.4"/>
<path d="M382.7,466.49 A45.13,42.69 0 0 1 472.96,466.49 L472.96,466.99 A45.13,42.18 0 0 1 382.7,466.99Z" fill="#7a6600"/>
<path d="M383.15,466.14 A44.68,42.24 0 0 1 472.51,466.14 L472.51,466.64 A44.68,41.73 0 0 1 383.15,466.64Z" fill="#ad9200"/>
<path d="M383.7,465.59 A44.13,41.69 0 0 1 471.96,465.59 L471.96,466.09 A44.13,41.18 0 0 1 383.7,466.09Z" fill="#d0b300"/>
<path d="M384.5,464.89 A43.33,40.89 0 0 1 471.16,464.89 L471.16,465.39 A43.33,40.38 0 0 1 384.5,465.39Z" fill="#e0c300"/>
<path d="M388.94,466.06 A38.68,36.61 0 0 1 466.29,466.06 L466.29,466.34 A38.68,36.34 0 0 1 388.94,466.34Z" fill="none" stroke="#f2d800" stroke-width="1.4"/>
<path d="M389.44,465.06 A38.18,36.11 0 0 1 465.79,465.06 L465.79,465.34 A38.18,35.84 0 0 1 389.44,465.34Z" fill="#7a6600"/>
<path d="M389.89,464.71 A37.73,35.66 0 0 1 465.34,464.71 L465.34,464.99 A37.73,35.39 0 0 1 389.89,464.99Z" fill="#ad9200"/>
<path d="M390.44,464.16 A37.18,35.11 0 0 1 464.79,464.16 L464.79,464.44 A37.18,34.84 0 0 1 390.44,464.44Z" fill="#d0b300"/>
<path d="M391.24,463.46 A36.38,34.31 0 0 1 463.99,463.46 L463.99,463.74 A36.38,34.04 0 0 1 391.24,463.74Z" fill="#e0c300"/>
<path d="M395.56,464.92 A31.85,30.15 0 0 1 459.26,464.92 L459.26,465.04 A31.85,30.03 0 0 1 395.56,465.04Z" fill="none" stroke="#f2d800" stroke-width="1.4"/>
<path d="M396.06,463.92 A31.35,29.65 0 0 1 458.76,463.92 L458.76,464.04 A31.35,29.53 0 0 1 396.06,464.04Z" fill="#7a6600"/>
<path d="M396.51,463.57 A30.9,29.2 0 0 1 458.31,463.57 L458.31,463.69 A30.9,29.08 0 0 1 396.51,463.69Z" fill="#ad9200"/>
<path d="M397.06,463.02 A30.35,28.65 0 0 1 457.76,463.02 L457.76,463.14 A30.35,28.53 0 0 1 397.06,463.14Z" fill="#d0b300"/>
<path d="M397.86,462.32 A29.55,27.85 0 0 1 456.96,462.32 L456.96,462.44 A29.55,27.73 0 0 1 397.86,462.44Z" fill="#e0c300"/>
<path d="M403.23,463.89 A23.95,22.68 0 0 1 451.13,463.89 L451.13,463.92 A23.95,22.65 0 0 1 403.23,463.92Z" fill="none" stroke="#f2d800" stroke-width="1.4"/>
<path d="M403.73,462.89 A23.45,22.18 0 0 1 450.63,462.89 L450.63,462.92 A23.45,22.15 0 0 1 403.73,462.92Z" fill="#7a6600"/>
<path d="M404.18,462.54 A23,21.73 0 0 1 450.18,462.54 L450.18,462.57 A23,21.7 0 0 1 404.18,462.57Z" fill="#ad9200"/>
<path d="M404.73,461.99 A22.45,21.18 0 0 1 449.63,461.99 L449.63,462.02 A22.45,21.15 0 0 1 404.73,462.02Z" fill="#d0b300"/>
<path d="M405.53,461.29 A21.65,20.38 0 0 1 448.83,461.29 L448.83,461.32 A21.65,20.35 0 0 1 405.53,461.32Z" fill="#e0c300"/>
<path d="M409.29,463.3 A17.71,16.77 0 0 1 444.71,463.3 L444.71,463.3 A17.71,16.77 0 0 1 409.29,463.3Z" fill="none" stroke="#f2d800" stroke-width="1.4"/>
<path d="M409.79,462.3 A17.21,16.27 0 0 1 444.21,462.3 L444.21,462.3 A17.21,16.27 0 0 1 409.79,462.3Z" fill="#7a6600"/>
<path d="M410.24,461.95 A16.76,15.82 0 0 1 443.76,461.95 L443.76,461.95 A16.76,15.82 0 0 1 410.24,461.95Z" fill="#ad9200"/>
<path d="M410.79,461.4 A16.21,15.27 0 0 1 443.21,461.4 L443.21,461.4 A16.21,15.27 0 0 1 410.79,461.4Z" fill="#d0b300"/>
<path d="M411.59,460.7 A15.41,14.47 0 0 1 442.41,460.7 L442.41,460.7 A15.41,14.47 0 0 1 411.59,460.7Z" fill="#e0c300"/>
</g>
<ellipse cx="426.9" cy="462.2" rx="15.6" ry="15.3" fill="#7a6600"/>
<ellipse cx="426.9" cy="462" rx="14.8" ry="14.5" fill="#d06676"/>
<ellipse cx="426.9" cy="462" rx="14.8" ry="14.5" fill="none" stroke="#a04858" stroke-width="1" stroke-dasharray="1.5 1.5"/>
<ellipse cx="426.9" cy="462.2" rx="10.6" ry="10.3" fill="#7a6600"/>
<ellipse cx="426.9" cy="461.8" rx="10" ry="9.7" fill="#d0b300"/>
<ellipse cx="426.9" cy="461" rx="8.4" ry="8.1" fill="#eccf00"/>
<ellipse cx="426" cy="460.4" rx="3.4" ry="3.6" fill="#d06676"/>
</g>

<!-- slider -->
<rect x="601" y="112" width="3" height="122" rx="1.5" fill="#a9a9a9"/>
<rect x="601" y="234" width="3" height="456" rx="1.5" fill="#2c8afc"/>
<circle cx="602.4" cy="234.2" r="8" fill="#ffffff" stroke="#b5b5b5" stroke-width="0.8"/>
<text x="603" y="710" font-size="11.5" text-anchor="middle" fill="#1a1a1a">8.05</text>

<!-- bottom segmented -->
<rect x="216" y="725.5" width="214.5" height="20" rx="4.5" fill="#ffffff" stroke="#c3c3c3"/>
<rect x="296.5" y="725" width="70.5" height="21" fill="url(#gBlue)"/>
<rect x="256.5" y="726" width="1" height="19" fill="#dcdcdc"/>
<g font-size="13" fill="#1a1a1a">
<text x="228.4" y="740" textLength="17.3" lengthAdjust="spacingAndGlyphs">3D</text>
<text x="268.8" y="740" textLength="17.3" lengthAdjust="spacingAndGlyphs">2D</text>
<text x="308.5" y="740" fill="#ffffff" textLength="46.5" lengthAdjust="spacingAndGlyphs">Preview</text>
<text x="378.5" y="740" textLength="38.7" lengthAdjust="spacingAndGlyphs">Layers</text>
</g>

<!-- right panel -->
<g font-size="12" fill="#1a1a1a" text-anchor="end">
<text x="714.3" y="121.6">Print settings:</text>
<text x="714.3" y="150.5" textLength="46.8" lengthAdjust="spacingAndGlyphs">Filament:</text>
<text x="714.3" y="179.5" textLength="37.8" lengthAdjust="spacingAndGlyphs">Printer:</text>
</g>
<rect x="726.5" y="106.5" width="237" height="21.5" fill="#ffffff" stroke="#9d9d9d"/>
<rect x="729" y="109" width="232" height="16.5" fill="#a7d0ff"/>
<rect x="726.5" y="135.5" width="237" height="21.5" fill="#ffffff" stroke="#9d9d9d"/>
<rect x="726.5" y="164.5" width="237" height="21.5" fill="#ffffff" stroke="#9d9d9d"/>
<g fill="#ffffff" stroke="#c6c6c6">
<rect x="967.5" y="106.5" width="19.5" height="20" rx="4"/>
<rect x="967.5" y="135.5" width="19.5" height="20" rx="4"/>
<rect x="967.5" y="164.5" width="19.5" height="20" rx="4"/>
</g>
<g fill="none" stroke="#2a2a2a" stroke-width="1.5">
<path d="M974,115 l3.2,3 l3.2,-3"/>
<path d="M974,144 l3.2,3 l3.2,-3"/>
<path d="M974,173 l3.2,3 l3.2,-3"/>
</g>
<g font-size="13" fill="#111">
<text x="752.5" y="122" textLength="27" lengthAdjust="spacingAndGlyphs">0.25</text>
<text x="752.8" y="151" textLength="24.8" lengthAdjust="spacingAndGlyphs">ABS</text>
<text x="752.8" y="180" textLength="66.4" lengthAdjust="spacingAndGlyphs">Rebel II 0.4</text>
</g>
<!-- export buttons -->
<rect x="741.5" y="192" width="108.5" height="23" rx="4.5" fill="#ffffff" stroke="#c6c6c6"/>
<rect x="856" y="192" width="130" height="23" rx="4.5" fill="#ffffff" stroke="#c6c6c6"/>
<g font-size="13" fill="#1a1a1a">
<text x="766.5" y="208" textLength="77" lengthAdjust="spacingAndGlyphs">Export STL...</text>
<text x="880.5" y="208" textLength="98" lengthAdjust="spacingAndGlyphs">Export G-code...</text>
</g>

<!-- list -->
<rect x="639.5" y="224.5" width="349" height="442" fill="#ffffff" stroke="#a8a8a8"/>
<rect x="640" y="228" width="348" height="14" fill="#f5f5f5"/>
<rect x="640" y="242" width="242" height="20" fill="#d4d4d4"/>
<g fill="#d4d4d4"><rect x="786" y="229" width="1" height="12"/><rect x="831" y="229" width="1" height="12"/><rect x="881.5" y="229" width="1" height="12"/></g>
<g font-size="11" fill="#1a1a1a">
<text x="645.4" y="239">Name</text>
<text x="790" y="239">Copies</text>
<text x="842" y="239">Scale</text>
<text x="641.4" y="256">b.stl</text>
<text x="803" y="256" text-anchor="middle">1</text>
<text x="839.5" y="256">100%</text>
</g>

<!-- info -->
<text x="652.5" y="678" font-size="11" fill="#1a1a1a">Info</text>
<rect x="642.5" y="681.5" width="343" height="66" rx="4" fill="#d7d7d7" stroke="#d0d0d0"/>
<g font-size="12" fill="#1a1a1a">
<text x="652.3" y="700" textLength="25.3" lengthAdjust="spacingAndGlyphs">Size:</text>
<text x="710.4" y="700" textLength="120.3" lengthAdjust="spacingAndGlyphs">27.00 x 20.00 x 10.00</text>
<text x="652.5" y="719">Facets:</text>
<text x="710.5" y="719">940 (1 shells)</text>
<text x="652.5" y="738">Manifold:</text>
<text x="710.5" y="738">Yes</text>
<text x="854.4" y="700">Volume:</text>
<text x="915.6" y="700" textLength="45.6" lengthAdjust="spacingAndGlyphs">2556.87</text>
<text x="854.4" y="719">Materials:</text>
<text x="915.9" y="719">1</text>
</g>
<defs>
<linearGradient id="gGreenC" x1="0" y1="0" x2="0" y2="1"><stop offset="0" stop-color="#8fd88a"/><stop offset="1" stop-color="#3fa03f"/></linearGradient>
<linearGradient id="gRedC" x1="0" y1="0" x2="0" y2="1"><stop offset="0" stop-color="#ff9a88"/><stop offset="1" stop-color="#d8402e"/></linearGradient>
<linearGradient id="gOrangeC" x1="0" y1="0" x2="0" y2="1"><stop offset="0" stop-color="#ffa050"/><stop offset="1" stop-color="#e05a00"/></linearGradient>
<linearGradient id="gGear" x1="0" y1="0" x2="0" y2="1"><stop offset="0" stop-color="#f2f2f2"/><stop offset="1" stop-color="#bdbdbd"/></linearGradient>
<g id="brick"><path d="M8,3.2 L15.6,6.6 L15.6,11.6 L8,15 L0.4,11.6 L0.4,6.6Z" fill="#e6e6e6" stroke="#a8a8a8" stroke-width="0.7"/><path d="M8,3.2 L15.6,6.6 L8,10 L0.4,6.6Z" fill="#f7f7f7"/><path d="M8,10 L15.6,6.6 L15.6,11.6 L8,15Z" fill="#d2d2d2"/><path d="M0.4,6.6 L8,10 L8,15 L0.4,11.6Z" fill="#ebebeb"/><g fill="#ffffff" stroke="#b0b0b0" stroke-width="0.5"><path d="M6,2.2 v1.6 a2,1.1 0 0 0 4,0 v-1.6"/><ellipse cx="8" cy="2.2" rx="2" ry="1.1"/><path d="M9.8,4.2 v1.6 a2,1.1 0 0 0 4,0 v-1.6"/><ellipse cx="11.8" cy="4.2" rx="2" ry="1.1"/><path d="M2.2,4.2 v1.6 a2,1.1 0 0 0 4,0 v-1.6"/><ellipse cx="4.2" cy="4.2" rx="2" ry="1.1"/><path d="M6,6.2 v1.6 a2,1.1 0 0 0 4,0 v-1.6"/><ellipse cx="8" cy="6.2" rx="2" ry="1.1"/></g></g>
<g id="garrow"><path d="M0,3 h5 v-3 l5,4.8 l-5,4.8 v-3 h-5z" fill="#7cc878" stroke="#2f9a2a" stroke-width="1"/></g>
<path id="gear8" d="M5.44,-1.33 L7.68,-1.37 L7.68,1.37 L5.44,1.33 L4.79,2.91 L6.4,4.46 L4.46,6.4 L2.91,4.79 L1.33,5.44 L1.37,7.68 L-1.37,7.68 L-1.33,5.44 L-2.91,4.79 L-4.46,6.4 L-6.4,4.46 L-4.79,2.91 L-5.44,1.33 L-7.68,1.37 L-7.68,-1.37 L-5.44,-1.33 L-4.79,-2.91 L-6.4,-4.46 L-4.46,-6.4 L-2.91,-4.79 L-1.33,-5.44 L-1.37,-7.68 L1.37,-7.68 L1.33,-5.44 L2.91,-4.79 L4.46,-6.4 L6.4,-4.46 L4.79,-2.91Z"/>
</defs>
<use href="#brick" x="24" y="61"/>
<circle cx="36.5" cy="73" r="3.6" fill="#4a9a3a" stroke="#2e7a22" stroke-width="0.6"/><path d="M34.6,73 h3.8 M36.5,71.1 v3.8" stroke="#fff" stroke-width="1.2"/>
<use href="#brick" x="66.2" y="61"/>
<circle cx="78.5" cy="73" r="3.6" fill="url(#gOrangeC)" stroke="#c84e00" stroke-width="0.6"/><path d="M76.6,73 h3.8" stroke="#fff" stroke-width="1.3"/>
<path d="M121.5,63.5 L132.5,74.5 M132.5,63.5 L121.5,74.5" stroke="#f26a6a" stroke-width="3.2" stroke-linecap="round"/>
<path d="M121.5,63.5 L132.5,74.5 M132.5,63.5 L121.5,74.5" stroke="#ff9a9a" stroke-width="1" stroke-linecap="round" opacity="0.7"/>
<path d="M175.2,67.81 L179.3,70.11 L183.4,67.81 L183.4,72.89 L179.3,75.2 L175.2,72.89Z" fill="#9ad490" stroke="#5a9a50" stroke-width="0.6"/><path d="M175.2,67.81 L179.3,65.5 L183.4,67.81 L179.3,70.11Z" fill="#c8ecc0"/><path d="M179.3,70.11 L183.4,67.81 L183.4,72.89 L179.3,75.2Z" fill="#6fb866"/>
<path d="M181.5,71.03 L186,73.56 L190.5,71.03 L190.5,76.61 L186,79.14 L181.5,76.61Z" fill="#a8c8f0" stroke="#4a7ac0" stroke-width="0.6"/><path d="M181.5,71.03 L186,68.5 L190.5,71.03 L186,73.56Z" fill="#cfe2fa"/><path d="M186,73.56 L190.5,71.03 L190.5,76.61 L186,79.14Z" fill="#7aa6e0"/>
<path d="M179.5,64.09 L184.1,66.67 L188.7,64.09 L188.7,69.79 L184.1,72.38 L179.5,69.79Z" fill="#f89090" stroke="#c04040" stroke-width="0.6"/><path d="M179.5,64.09 L184.1,61.5 L188.7,64.09 L184.1,66.67Z" fill="#ffd0d0"/><path d="M184.1,66.67 L188.7,64.09 L188.7,69.79 L184.1,72.38Z" fill="#e06060"/>
<circle cx="238" cy="68.8" r="6.6" fill="url(#gGreenC)" stroke="#3d953d" stroke-width="0.7"/><circle cx="238" cy="68.8" r="5.2" fill="none" stroke="#b8e8b0" stroke-width="0.5" opacity="0.7"/>
<path d="M234.6,68.8 h6.8 M238,65.4 v6.8" stroke="#ffffff" stroke-width="2.1"/>
<circle cx="277" cy="68.8" r="6.6" fill="url(#gRedC)" stroke="#c64a3a" stroke-width="0.7"/><circle cx="277" cy="68.8" r="5.2" fill="none" stroke="#ffd0c8" stroke-width="0.5" opacity="0.7"/>
<path d="M273.4,68.8 h7.2" stroke="#ffffff" stroke-width="2.1"/>
<g transform="translate(335,69.5)"><path d="M4.6,-2.4 A5,5 0 1 0 2.6,4.4" fill="none" stroke="#3f9a3f" stroke-width="4"/><path d="M4.6,-2.4 A5,5 0 1 0 2.6,4.4" fill="none" stroke="#8fd48a" stroke-width="2.4"/><path d="M-0.5,2.2 L6,1.2 L3.2,7.6Z" fill="#5cb85a" stroke="#3f9a3f" stroke-width="0.6"/></g>
<g transform="translate(386,69.5) scale(-1,1)"><path d="M4.6,-2.4 A5,5 0 1 0 2.6,4.4" fill="none" stroke="#3f9a3f" stroke-width="4"/><path d="M4.6,-2.4 A5,5 0 1 0 2.6,4.4" fill="none" stroke="#8fd48a" stroke-width="2.4"/><path d="M-0.5,2.2 L6,1.2 L3.2,7.6Z" fill="#5cb85a" stroke="#3f9a3f" stroke-width="0.6"/></g>
<g transform="translate(426,61)"><path d="M0,0 h5 l-1.6,1.6 l2.6,2.6 l-1.8,1.8 l-2.6,-2.6 l-1.6,1.6z" fill="#5cc060" stroke="#48a84c" stroke-width="0.4"/></g>
<g transform="translate(442,61) scale(-1,1)"><path d="M0,0 h5 l-1.6,1.6 l2.6,2.6 l-1.8,1.8 l-2.6,-2.6 l-1.6,1.6z" fill="#5cc060" stroke="#48a84c" stroke-width="0.4"/></g>
<g transform="translate(426,77) scale(1,-1)"><path d="M0,0 h5 l-1.6,1.6 l2.6,2.6 l-1.8,1.8 l-2.6,-2.6 l-1.6,1.6z" fill="#5cc060" stroke="#48a84c" stroke-width="0.4"/></g>
<g transform="translate(442,77) scale(-1,-1)"><path d="M0,0 h5 l-1.6,1.6 l2.6,2.6 l-1.8,1.8 l-2.6,-2.6 l-1.6,1.6z" fill="#5cc060" stroke="#48a84c" stroke-width="0.4"/></g>
<rect x="469.6" y="63.5" width="7.9" height="6.9" fill="#a8ccf8" stroke="#8ab4f0" stroke-width="0.6"/>
<rect x="472.4" y="67.5" width="8.1" height="7" fill="#86b2ee" stroke="#5a8ee0" stroke-width="0.6"/>
<circle cx="469.6" cy="63.5" r="1.3" fill="#e8e8e8" stroke="#707070" stroke-width="0.9"/>
<circle cx="477.5" cy="63.5" r="1.3" fill="#e8e8e8" stroke="#707070" stroke-width="0.9"/>
<circle cx="469.6" cy="70.4" r="1.3" fill="#e8e8e8" stroke="#707070" stroke-width="0.9"/>
<circle cx="472.4" cy="67.5" r="1.3" fill="#e8e8e8" stroke="#202020" stroke-width="0.9"/>
<circle cx="480.5" cy="67.5" r="1.3" fill="#e8e8e8" stroke="#202020" stroke-width="0.9"/>
<circle cx="472.4" cy="74.5" r="1.3" fill="#e8e8e8" stroke="#202020" stroke-width="0.9"/>
<circle cx="480.5" cy="74.5" r="1.3" fill="#e8e8e8" stroke="#202020" stroke-width="0.9"/>
<path d="M511,61.2 L518.6,65 L518.6,73 L511,76.8 L503.4,73 L503.4,65Z" fill="#f6c850" stroke="#e2a22a" stroke-width="1"/>
<path d="M511,62.2 L517.6,65.4 L511,68.8 L504.4,65.4Z" fill="#fff2c8"/>
<path d="M504.4,65.4 L511,68.8 L511,75.8 L504.4,72.6Z" fill="#fde7a0"/>
<path d="M511,68.8 L517.6,65.4 L517.6,72.6 L511,75.8Z" fill="#f1c040"/>
<g transform="translate(572,68.7)"><use href="#gear8" fill="url(#gGear)" stroke="#a6a6a6" stroke-width="0.7"/><circle r="2.6" fill="#c4c4c4" stroke="#9a9a9a" stroke-width="0.6"/></g>
<g transform="translate(739,117)"><use href="#gear8" fill="#dcdcdc" stroke="#a8a8a8" stroke-width="0.7"/><circle r="2.6" fill="#a7d0ff" stroke="#9a9a9a" stroke-width="0.6"/></g>
<g transform="translate(731,169)"><rect x="4" y="0" width="7.6" height="2.6" fill="#f4f4f4" stroke="#8a8a8a" stroke-width="0.7"/><path d="M2,2 h11.8 a1.6,1.6 0 0 1 1.6,1.6 v6.4 a1.6,1.6 0 0 1 -1.6,1.6 h-11.8 a1.6,1.6 0 0 1 -1.6,-1.6 v-6.4 a1.6,1.6 0 0 1 1.6,-1.6z" fill="#f2f2f2" stroke="#6a6a6a" stroke-width="0.8"/><rect x="3.2" y="4.4" width="9.4" height="5" fill="#d2d2d2" stroke="#5a5a5a" stroke-width="0.6"/><rect x="3.2" y="9.6" width="9.4" height="1.6" fill="#444"/></g>
<use href="#brick" x="746" y="195"/>
<use href="#garrow" x="752.4" y="202.2"/>
<g transform="translate(868,202.8)"><use href="#gear8" fill="#dedede" stroke="#a0a0a0" stroke-width="0.7"/><circle r="2.6" fill="#fff" stroke="#9a9a9a" stroke-width="0.6"/></g>
<use href="#garrow" x="866.4" y="202.2"/>
</svg>
</body></html>
